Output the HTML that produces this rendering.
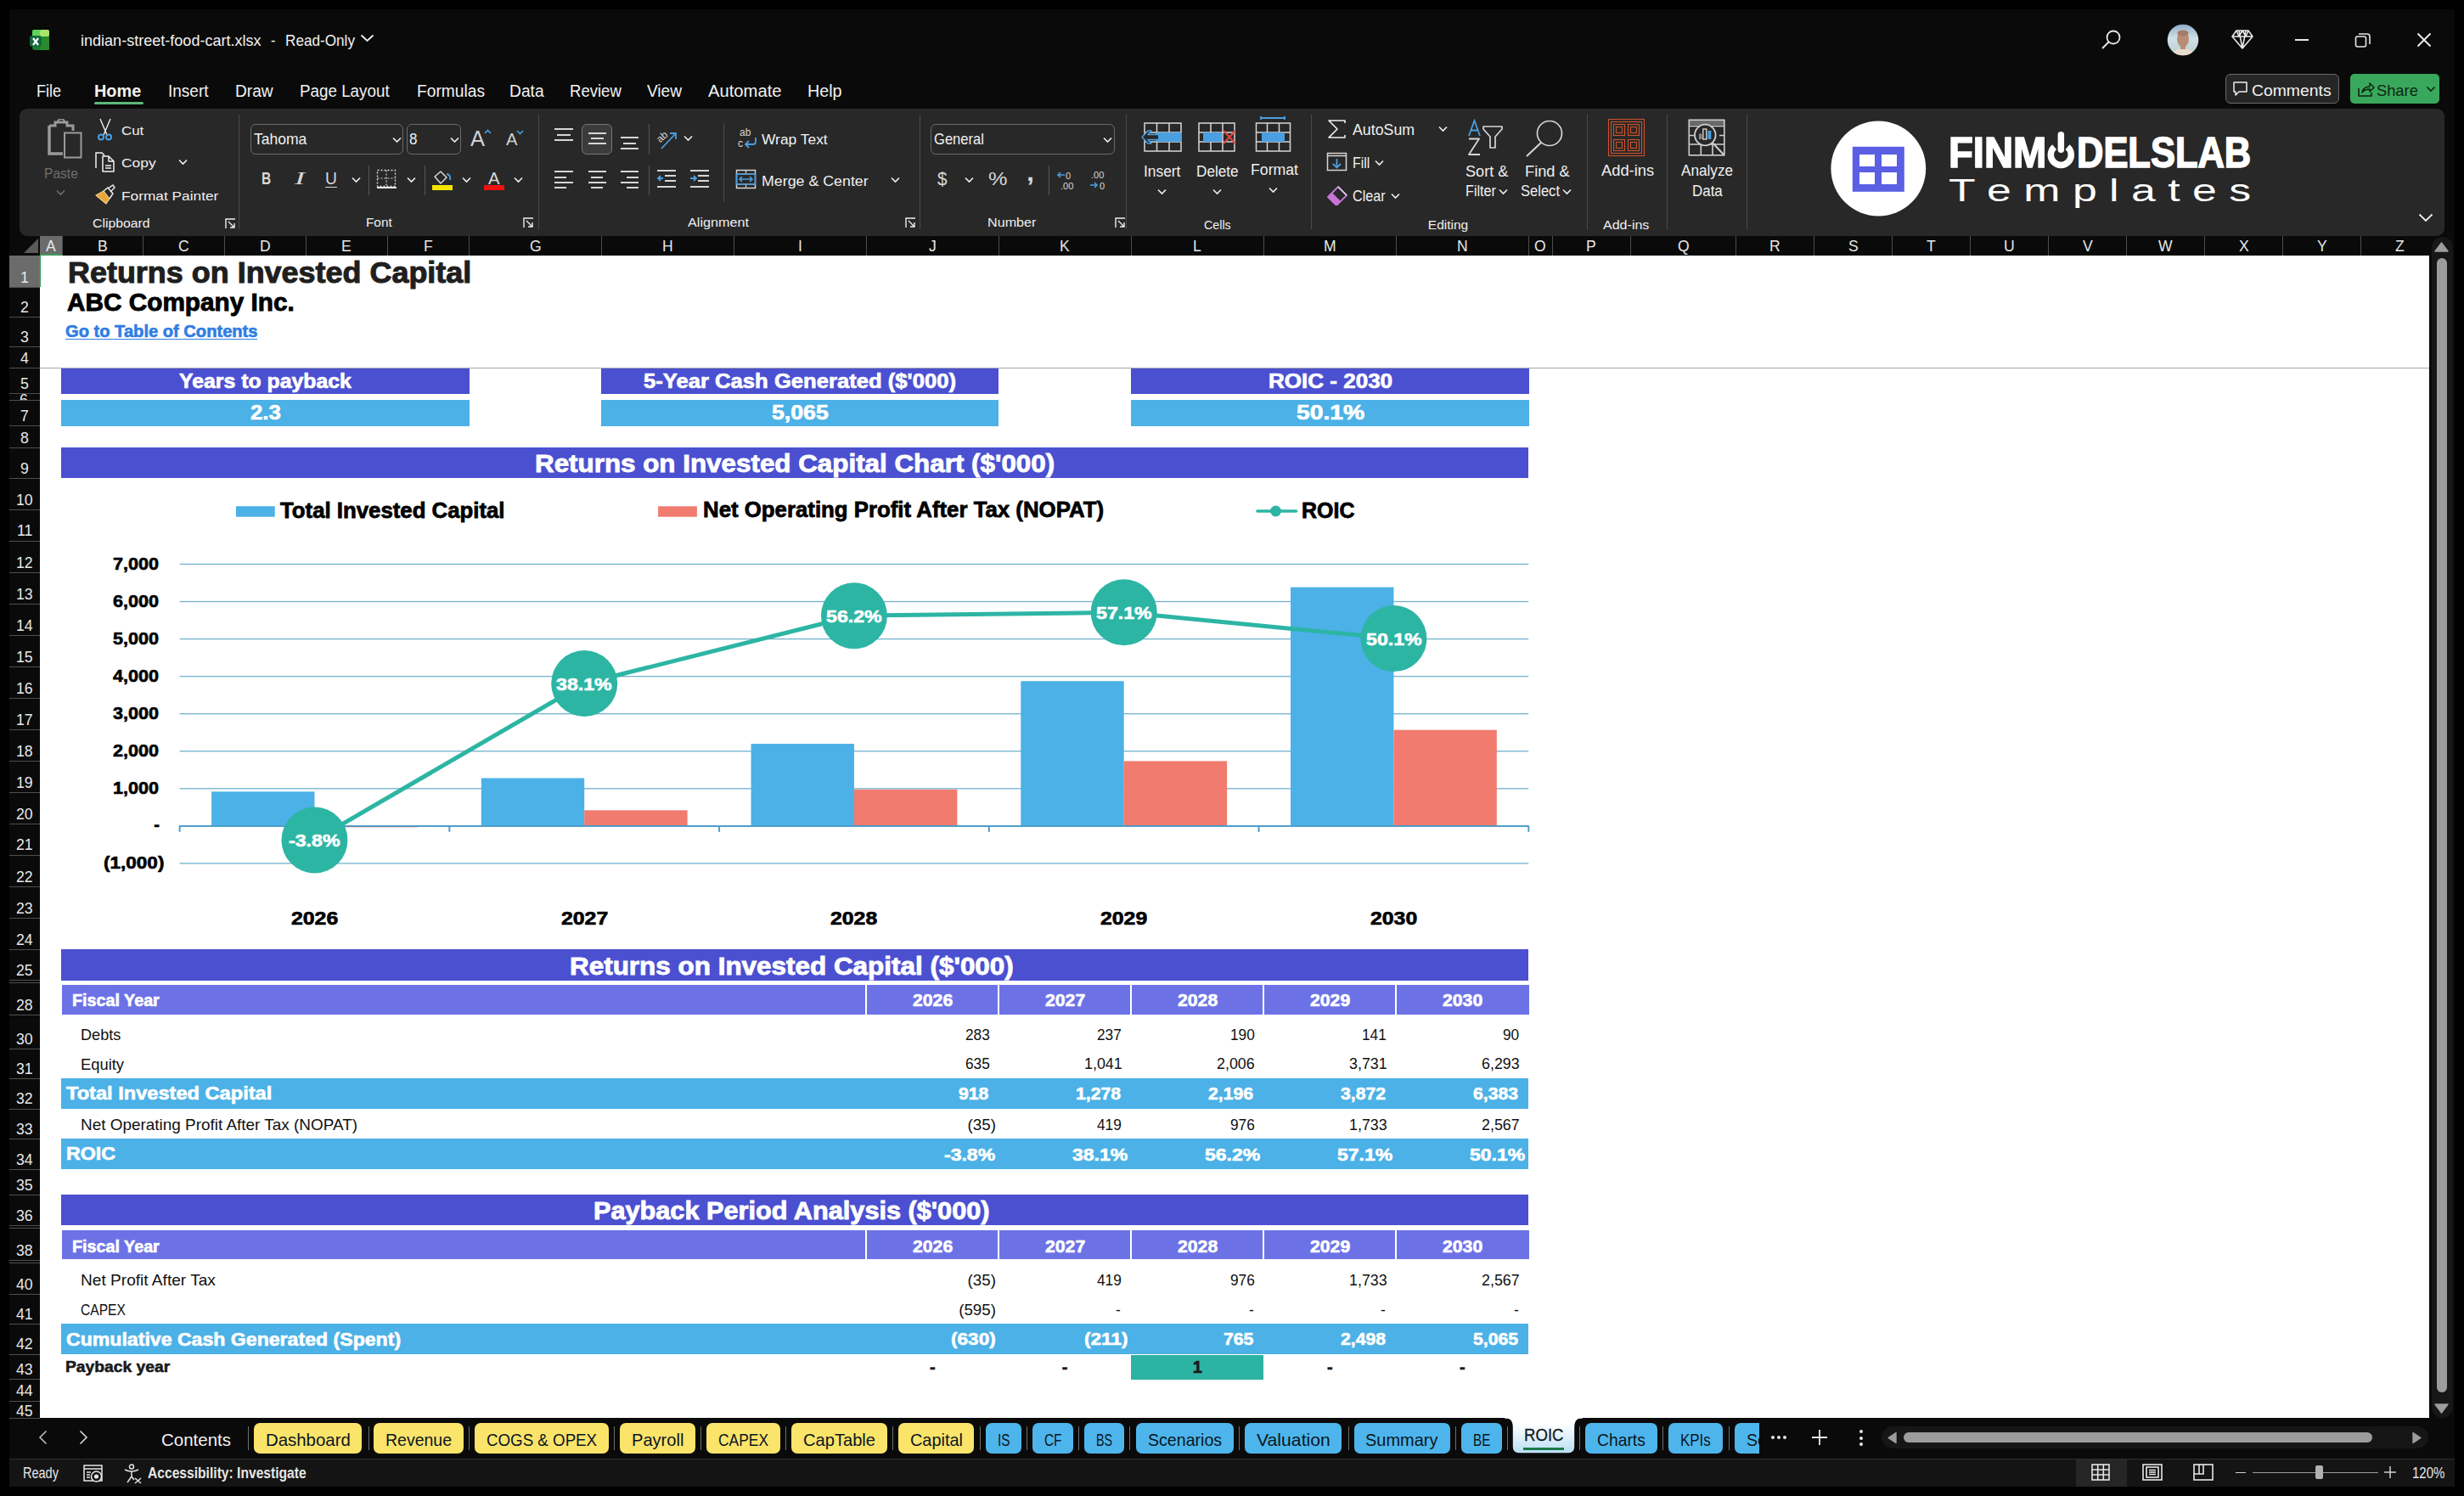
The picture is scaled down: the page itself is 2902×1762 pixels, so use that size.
<!DOCTYPE html><html><head><meta charset='utf-8'><style>
html,body{margin:0;padding:0;}
body{width:2902px;height:1762px;position:relative;overflow:hidden;background:#000;font-family:"Liberation Sans",sans-serif;}
.a{position:absolute;}
.t{position:absolute;white-space:pre;line-height:normal;transform-origin:0 0;}
</style></head><body>
<div class=a style="left:11.00px;top:11.00px;width:2880.00px;height:1740.00px;background:#0a0a0a;"></div>
<svg class=a style="left:35.00px;top:33.00px;" width="28" height="28" viewBox="0 0 28 28">
      <rect x='3' y='2' width='20' height='24' rx='3' fill='#1f7a38'/>
      <rect x='3' y='2' width='10' height='8' rx='2' fill='#5fd35a'/>
      <rect x='12' y='2' width='11' height='8' rx='2' fill='#a8e66a'/>
      <rect x='12' y='10' width='11' height='16' fill='#2a8a2e'/>
      <rect x='0' y='9' width='14' height='13' rx='3' fill='#106b3a'/>
      <path d='M4 12 L10 20 M10 12 L4 20' stroke='#fff' stroke-width='2.2'/>
    </svg>
<div class=t style='left:95.40px;top:36.59px;font-size:19.00px;color:#f2f2f2;transform:scaleX(0.9496);'>indian-street-food-cart.xlsx</div>
<div class=t style='left:318.60px;top:36.59px;font-size:19.00px;color:#f2f2f2;transform:scaleX(0.8533);'>-</div>
<div class=t style='left:335.70px;top:36.59px;font-size:19.00px;color:#f2f2f2;transform:scaleX(0.9028);'>Read-Only</div>
<svg class=a style="left:424.00px;top:40.00px;" width="17" height="10" viewBox="0 0 17 10"><path d='M1.5 1.5 L8.5 8 L15.5 1.5' stroke='#f2f2f2' stroke-width='1.8' fill='none'/></svg>
<svg class=a style="left:2474.00px;top:34.00px;" width="25" height="26" viewBox="0 0 25 26"><circle cx='15' cy='10' r='7.5' stroke='#e8e8e8' stroke-width='1.8' fill='none'/><path d='M9.5 15.5 L2 23' stroke='#e8e8e8' stroke-width='2' /></svg>
<svg class=a style="left:2552.00px;top:28.00px;" width="38" height="38" viewBox="0 0 38 38"><defs><clipPath id='av'><circle cx='19' cy='19' r='18.3'/></clipPath>
      <linearGradient id='avg' x1='0' y1='0' x2='0' y2='1'><stop offset='0' stop-color='#8fa9c9'/><stop offset='0.45' stop-color='#cfe0e6'/><stop offset='1' stop-color='#b9ccd2'/></linearGradient></defs>
      <g clip-path='url(#av)'><rect width='38' height='38' fill='url(#avg)'/><path d='M5 38 Q8 29 19 29 Q30 29 33 38 Z' fill='#e6dccb'/>
      <ellipse cx='19' cy='18' rx='7' ry='9.5' fill='#b98d74'/><ellipse cx='19' cy='11' rx='6.5' ry='3.5' fill='#a57c66'/><rect x='16' y='25' width='6' height='5' fill='#b98d74'/></g></svg>
<svg class=a style="left:2627.00px;top:34.00px;" width="28" height="25" viewBox="0 0 28 25"><path d='M7 2 H21 L26 9 L14 23 L2 9 Z M2 9 H26 M10 2 L14 23 M18 2 L14 23 M7 2 L10 9 L14 2 L18 9 L21 2' stroke='#e8e8e8' stroke-width='1.6' fill='none' stroke-linejoin='round'/></svg>
<div class=a style="left:2703.00px;top:46.00px;width:16.00px;height:1.60px;background:#e8e8e8;"></div>
<svg class=a style="left:2773.00px;top:38.00px;" width="20" height="19" viewBox="0 0 20 19"><rect x='1.5' y='5' width='12' height='12' rx='2' stroke='#e8e8e8' stroke-width='1.6' fill='none'/><path d='M5 2 H15 A3 3 0 0 1 18 5 V14' stroke='#e8e8e8' stroke-width='1.6' fill='none'/></svg>
<svg class=a style="left:2846.00px;top:38.00px;" width="18" height="18" viewBox="0 0 18 18"><path d='M1.5 1.5 L16.5 16.5 M16.5 1.5 L1.5 16.5' stroke='#f0f0f0' stroke-width='1.8'/></svg>
<div class=a style="left:2621.00px;top:87.40px;width:134.20px;height:34.60px;background:#262626;border:1px solid #6a6a6a;border-radius:6px;box-sizing:border-box;"></div>
<svg class=a style="left:2629.00px;top:95.00px;" width="20" height="20" viewBox="0 0 20 20"><path d='M2 2 H17 V13 H8 L4 17 V13 H2 Z' stroke='#f0f0f0' stroke-width='1.5' fill='none' stroke-linejoin='round'/></svg>
<div class=t style='left:2652.30px;top:95.99px;font-size:19.00px;color:#f2f2f2;transform:scaleX(1.0189);'>Comments</div>
<div class=a style="left:2768.20px;top:87.40px;width:104.80px;height:34.60px;background:#3aa85c;border-radius:5px;"></div>
<svg class=a style="left:2775.00px;top:94.00px;" width="22" height="22" viewBox="0 0 22 22"><path d='M3 10 V19 H18 V15' stroke='#0c2614' stroke-width='1.6' fill='none'/><path d='M7 15 C8 10 12 8 16 8 V4 L21 9 L16 14 V11 C12 11 9 12 7 15 Z' stroke='#0c2614' stroke-width='1.5' fill='none' stroke-linejoin='round'/></svg>
<div class=t style='left:2798.70px;top:95.99px;font-size:19.00px;color:#0c2614;transform:scaleX(0.9625);'>Share</div>
<svg class=a style="left:2857.00px;top:101.00px;" width="12" height="8" viewBox="0 0 12 8"><path d='M1.5 1.5 L6 6 L10.5 1.5' stroke='#0c2614' stroke-width='1.6' fill='none'/></svg>
<div class=t style='left:42.80px;top:95.11px;font-size:20.50px;color:#f2f2f2;transform:scaleX(0.8836);'>File</div>
<div class=t style='left:111.20px;top:95.11px;font-size:20.50px;color:#f2f2f2;font-weight:700;transform:scaleX(0.9690);'>Home</div>
<div class=t style='left:198.00px;top:95.11px;font-size:20.50px;color:#f2f2f2;transform:scaleX(0.9263);'>Insert</div>
<div class=t style='left:277.20px;top:95.11px;font-size:20.50px;color:#f2f2f2;transform:scaleX(0.9322);'>Draw</div>
<div class=t style='left:353.00px;top:95.11px;font-size:20.50px;color:#f2f2f2;transform:scaleX(0.9173);'>Page Layout</div>
<div class=t style='left:491.00px;top:95.11px;font-size:20.50px;color:#f2f2f2;transform:scaleX(0.9364);'>Formulas</div>
<div class=t style='left:599.80px;top:95.11px;font-size:20.50px;color:#f2f2f2;transform:scaleX(0.9374);'>Data</div>
<div class=t style='left:670.50px;top:95.11px;font-size:20.50px;color:#f2f2f2;transform:scaleX(0.9045);'>Review</div>
<div class=t style='left:761.80px;top:95.11px;font-size:20.50px;color:#f2f2f2;transform:scaleX(0.9302);'>View</div>
<div class=t style='left:834.00px;top:95.11px;font-size:20.50px;color:#f2f2f2;transform:scaleX(0.9858);'>Automate</div>
<div class=t style='left:950.90px;top:95.11px;font-size:20.50px;color:#f2f2f2;transform:scaleX(0.9627);'>Help</div>
<div class=a style="left:111.30px;top:120.00px;width:57.50px;height:3.00px;background:#5cb87a;border-radius:2px;"></div>
<div class=a style="left:23.20px;top:128.00px;width:2855.60px;height:149.80px;background:#282828;border-radius:9px;"></div>
<svg class=a style="left:54.00px;top:140.00px;" width="44" height="48" viewBox="0 0 44 48"><path d='M4 8 H11 V4 H25 V8 H32 V14' stroke='#9a9a9a' stroke-width='3' fill='none'/>
      <path d='M4 8 V41 H20' stroke='#9a9a9a' stroke-width='3.5' fill='none'/>
      <path d='M14 4 A4 4 0 0 1 22 4' stroke='#9a9a9a' stroke-width='2' fill='none'/>
      <rect x='22' y='16.5' width='19.5' height='29' stroke='#9a9a9a' stroke-width='2' fill='none'/></svg>
<div class=t style='left:52.20px;top:194.59px;font-size:16.50px;color:#707070;transform:scaleX(0.9431);'>Paste</div>
<svg class=a style="left:65.50px;top:223.25px;" width="11.0" height="7.5" viewBox="0 0 11.0 7.5"><path d='M1 1.5 L5.5 6.0 L10.0 1.5' stroke='#707070' stroke-width='1.6' fill='none'/></svg>
<svg class=a style="left:114.00px;top:139.00px;" width="20" height="27" viewBox="0 0 20 27"><path d='M4 1 L12 20 M16 1 L8 20' stroke='#f0f0f0' stroke-width='1.4'/>
      <circle cx='5' cy='22.5' r='3' stroke='#4a9fe0' stroke-width='2' fill='none'/><circle cx='14' cy='22.5' r='3' stroke='#4a9fe0' stroke-width='2' fill='none'/></svg>
<div class=t style='left:142.70px;top:144.82px;font-size:15.50px;color:#f0f0f0;transform:scaleX(1.0902);'>Cut</div>
<svg class=a style="left:111.00px;top:178.00px;" width="26" height="27" viewBox="0 0 26 27"><path d='M2 20 V2 H9 L12 5' stroke='#f0f0f0' stroke-width='1.5' fill='none'/>
      <path d='M10 24 V6 H17 L23 12 V24 Z M17 6 V12 H23 M13 17 H20 M13 20 H20' stroke='#f0f0f0' stroke-width='1.5' fill='none' stroke-linejoin='round'/></svg>
<div class=t style='left:142.70px;top:183.32px;font-size:15.50px;color:#f0f0f0;transform:scaleX(1.1219);'>Copy</div>
<svg class=a style="left:209.80px;top:187.25px;" width="11.0" height="7.5" viewBox="0 0 11.0 7.5"><path d='M1 1.5 L5.5 6.0 L10.0 1.5' stroke='#f0f0f0' stroke-width='1.6' fill='none'/></svg>
<svg class=a style="left:111.00px;top:217.00px;" width="26" height="25" viewBox="0 0 26 25"><path d='M2 13 L11 8 L18 17 L14 23 Z' fill='#e8a63a' stroke='#f3d08a' stroke-width='1.2' stroke-linejoin='round'/>
      <path d='M11 8 L16 4 L22 11 L18 17' stroke='#f0f0f0' stroke-width='1.4' fill='none'/><path d='M16 5 L22 1 L24 4 L19 9' stroke='#f0f0f0' stroke-width='1.4' fill='none'/></svg>
<div class=t style='left:142.70px;top:222.42px;font-size:15.50px;color:#f0f0f0;transform:scaleX(1.1150);'>Format Painter</div>
<div class=t style='left:109.40px;top:253.52px;font-size:15.50px;color:#f0f0f0;transform:scaleX(1.0187);'>Clipboard</div>
<svg class=a style="left:264.50px;top:256.50px;" width="13" height="13" viewBox="0 0 13 13"><path d='M1 12 V1 H12 M4 4 L11 11 M11 6 V11 H6' stroke='#f0f0f0' stroke-width='1.4' fill='none'/></svg>
<div class=a style="left:281.40px;top:135.00px;width:1.00px;height:135.00px;background:#4a4a4a;"></div>
<div class=a style="left:295.30px;top:146.30px;width:180.20px;height:35.50px;border:1px solid #6a6a6a;border-radius:6px;box-sizing:border-box;"></div>
<div class=t style='left:298.70px;top:154.33px;font-size:18.20px;color:#f0f0f0;transform:scaleX(0.9629);'>Tahoma</div>
<svg class=a style="left:461.80px;top:160.75px;" width="11.0" height="7.5" viewBox="0 0 11.0 7.5"><path d='M1 1.5 L5.5 6.0 L10.0 1.5' stroke='#f0f0f0' stroke-width='1.6' fill='none'/></svg>
<div class=a style="left:479.40px;top:146.30px;width:64.00px;height:35.50px;border:1px solid #6a6a6a;border-radius:6px;box-sizing:border-box;"></div>
<div class=t style='left:482.30px;top:154.33px;font-size:18.20px;color:#f0f0f0;transform:scaleX(0.9383);'>8</div>
<svg class=a style="left:529.50px;top:160.75px;" width="11.0" height="7.5" viewBox="0 0 11.0 7.5"><path d='M1 1.5 L5.5 6.0 L10.0 1.5' stroke='#f0f0f0' stroke-width='1.6' fill='none'/></svg>
<div class=t style='left:553.50px;top:147.54px;font-size:26.00px;color:#d0d0d0;transform:scaleX(0.9802);'>A</div>
<svg class=a style="left:570.00px;top:152.00px;" width="9" height="6" viewBox="0 0 9 6"><path d='M1 5 L4.5 1.5 L8 5' stroke='#4a9fe0' stroke-width='1.6' fill='none'/></svg>
<div class=t style='left:595.60px;top:152.15px;font-size:21.00px;color:#d0d0d0;transform:scaleX(0.9632);'>A</div>
<svg class=a style="left:608.00px;top:153.00px;" width="9" height="6" viewBox="0 0 9 6"><path d='M1 1 L4.5 4.5 L8 1' stroke='#4a9fe0' stroke-width='1.6' fill='none'/></svg>
<div class=t style='left:307.80px;top:198.05px;font-size:21.00px;color:#d8d8d8;font-weight:700;transform:scaleX(0.7382);'>B</div>
<div class=t style='left:346.50px;top:198.05px;font-size:21.00px;color:#d8d8d8;transform:scaleX(1.7455);font-style:italic;font-family:"Liberation Serif";'>I</div>
<div class=t style='left:383.00px;top:199.43px;font-size:19.50px;color:#d8d8d8;transform:scaleX(0.9863);'>U</div>
<div class=a style="left:383.00px;top:219.50px;width:14.00px;height:1.60px;background:#d8d8d8;"></div>
<svg class=a style="left:413.50px;top:208.25px;" width="11.0" height="7.5" viewBox="0 0 11.0 7.5"><path d='M1 1.5 L5.5 6.0 L10.0 1.5' stroke='#f0f0f0' stroke-width='1.6' fill='none'/></svg>
<div class=a style="left:434.40px;top:194.50px;width:1.00px;height:35.80px;background:#555;"></div>
<svg class=a style="left:443.00px;top:199.00px;" width="25" height="25" viewBox="0 0 25 25"><rect x='1.5' y='1.5' width='21' height='19' stroke='#d8d8d8' stroke-width='1.4' stroke-dasharray='2 2' fill='none'/>
      <path d='M12 1.5 V20.5 M1.5 11 H22.5' stroke='#d8d8d8' stroke-width='1.2' stroke-dasharray='2 2'/><rect x='1' y='21' width='23' height='2' fill='#e8e8e8'/></svg>
<svg class=a style="left:478.80px;top:208.25px;" width="11.0" height="7.5" viewBox="0 0 11.0 7.5"><path d='M1 1.5 L5.5 6.0 L10.0 1.5' stroke='#f0f0f0' stroke-width='1.6' fill='none'/></svg>
<div class=a style="left:499.50px;top:194.50px;width:1.00px;height:35.80px;background:#555;"></div>
<svg class=a style="left:508.00px;top:199.00px;" width="27" height="26" viewBox="0 0 27 26"><path d='M4 9 L11 3 L18 10 L11 17 Z' stroke='#d8d8d8' stroke-width='1.5' fill='none' stroke-linejoin='round'/>
      <path d='M18 6 C21 6 23 9 22 13' stroke='#4a9fe0' stroke-width='2' fill='none'/><rect x='1' y='19' width='24' height='6' fill='#f5e400'/></svg>
<svg class=a style="left:543.80px;top:208.25px;" width="11.0" height="7.5" viewBox="0 0 11.0 7.5"><path d='M1 1.5 L5.5 6.0 L10.0 1.5' stroke='#f0f0f0' stroke-width='1.6' fill='none'/></svg>
<div class=t style='left:575.00px;top:198.53px;font-size:19.50px;color:#d8d8d8;transform:scaleX(1.0449);'>A</div>
<div class=a style="left:570.00px;top:218.30px;width:24.00px;height:5.70px;background:#ee1111;"></div>
<svg class=a style="left:604.50px;top:208.25px;" width="11.0" height="7.5" viewBox="0 0 11.0 7.5"><path d='M1 1.5 L5.5 6.0 L10.0 1.5' stroke='#f0f0f0' stroke-width='1.6' fill='none'/></svg>
<div class=t style='left:430.50px;top:253.22px;font-size:15.50px;color:#f0f0f0;transform:scaleX(0.9898);'>Font</div>
<svg class=a style="left:616.00px;top:256.00px;" width="13" height="13" viewBox="0 0 13 13"><path d='M1 12 V1 H12 M4 4 L11 11 M11 6 V11 H6' stroke='#f0f0f0' stroke-width='1.4' fill='none'/></svg>
<div class=a style="left:633.60px;top:135.00px;width:1.00px;height:135.00px;background:#4a4a4a;"></div>
<div class=a style="left:685.40px;top:146.30px;width:35.50px;height:35.50px;background:#3b3b3b;border:1px solid #777;border-radius:6px;box-sizing:border-box;"></div>
<div class=a style="left:653.30px;top:151.30px;width:21.50px;height:2.00px;background:#d6d6d6;"></div>
<div class=a style="left:656.30px;top:157.80px;width:15.50px;height:2.00px;background:#d6d6d6;"></div>
<div class=a style="left:653.30px;top:164.00px;width:21.50px;height:2.00px;background:#d6d6d6;"></div>
<div class=a style="left:692.50px;top:156.00px;width:21.50px;height:2.00px;background:#d6d6d6;"></div>
<div class=a style="left:695.50px;top:162.00px;width:15.50px;height:2.00px;background:#d6d6d6;"></div>
<div class=a style="left:692.50px;top:168.00px;width:21.50px;height:2.00px;background:#d6d6d6;"></div>
<div class=a style="left:730.80px;top:161.00px;width:21.50px;height:2.00px;background:#d6d6d6;"></div>
<div class=a style="left:733.80px;top:167.50px;width:15.50px;height:2.00px;background:#d6d6d6;"></div>
<div class=a style="left:730.80px;top:174.00px;width:21.50px;height:2.00px;background:#d6d6d6;"></div>
<div class=a style="left:763.50px;top:146.00px;width:1.00px;height:36.00px;background:#555;"></div>
<svg class=a style="left:771.00px;top:149.00px;" width="29" height="28" viewBox="0 0 29 28"><text x='2' y='16' font-family='Liberation Sans' font-size='12' fill='#d6d6d6' transform='rotate(-40 9 12)'>ab</text>
      <path d='M8 26 L25 8 M18 8 H25 V15' stroke='#4a9fe0' stroke-width='1.8' fill='none'/></svg>
<svg class=a style="left:804.50px;top:159.25px;" width="11.0" height="7.5" viewBox="0 0 11.0 7.5"><path d='M1 1.5 L5.5 6.0 L10.0 1.5' stroke='#f0f0f0' stroke-width='1.6' fill='none'/></svg>
<div class=a style="left:851.60px;top:145.00px;width:1.00px;height:93.00px;background:#4a4a4a;"></div>
<svg class=a style="left:869.00px;top:149.00px;" width="24" height="28" viewBox="0 0 24 28"><text x='2' y='11' font-family='Liberation Sans' font-size='12' fill='#d6d6d6'>ab</text><text x='0' y='24' font-family='Liberation Sans' font-size='12' fill='#d6d6d6'>c</text>
      <path d='M21 13 V18 A3 3 0 0 1 18 21 H10 M13 17 L9 21 L13 25' stroke='#4a9fe0' stroke-width='1.8' fill='none'/></svg>
<div class=t style='left:897.30px;top:156.44px;font-size:15.80px;color:#f0f0f0;transform:scaleX(1.1016);'>Wrap Text</div>
<div class=a style="left:653.30px;top:201.30px;width:21.50px;height:2.00px;background:#d6d6d6;"></div>
<div class=a style="left:653.30px;top:207.50px;width:14.00px;height:2.00px;background:#d6d6d6;"></div>
<div class=a style="left:653.30px;top:213.60px;width:21.50px;height:2.00px;background:#d6d6d6;"></div>
<div class=a style="left:653.30px;top:219.80px;width:14.00px;height:2.00px;background:#d6d6d6;"></div>
<div class=a style="left:692.50px;top:201.30px;width:21.50px;height:2.00px;background:#d6d6d6;"></div>
<div class=a style="left:730.80px;top:201.30px;width:21.50px;height:2.00px;background:#d6d6d6;"></div>
<div class=a style="left:696.25px;top:207.50px;width:14.00px;height:2.00px;background:#d6d6d6;"></div>
<div class=a style="left:738.30px;top:207.50px;width:14.00px;height:2.00px;background:#d6d6d6;"></div>
<div class=a style="left:692.50px;top:213.60px;width:21.50px;height:2.00px;background:#d6d6d6;"></div>
<div class=a style="left:730.80px;top:213.60px;width:21.50px;height:2.00px;background:#d6d6d6;"></div>
<div class=a style="left:696.25px;top:219.80px;width:14.00px;height:2.00px;background:#d6d6d6;"></div>
<div class=a style="left:738.30px;top:219.80px;width:14.00px;height:2.00px;background:#d6d6d6;"></div>
<div class=a style="left:763.50px;top:194.50px;width:1.00px;height:35.80px;background:#555;"></div>
<svg class=a style="left:773.00px;top:199.00px;" width="24" height="24" viewBox="0 0 24 24"><path d='M1 2 H23 M10 8 H23 M10 14 H23 M1 21 H23' stroke='#d6d6d6' stroke-width='1.8'/><path d='M8 11 H2 M5 8 L2 11 L5 14' stroke='#4a9fe0' stroke-width='1.8' fill='none'/></svg>
<svg class=a style="left:812.00px;top:199.00px;" width="24" height="24" viewBox="0 0 24 24"><path d='M1 2 H23 M10 8 H23 M10 14 H23 M1 21 H23' stroke='#d6d6d6' stroke-width='1.8'/><path d='M1 11 H8 M5 8 L8 11 L5 14' stroke='#4a9fe0' stroke-width='1.8' fill='none'/></svg>
<svg class=a style="left:866.00px;top:199.00px;" width="25" height="25" viewBox="0 0 25 25"><rect x='1.5' y='1.5' width='22' height='21' stroke='#d6d6d6' stroke-width='1.5' fill='none'/><path d='M1.5 6 H23.5 M1.5 18 H23.5 M12.5 1.5 V6 M12.5 18 V22.5' stroke='#d6d6d6' stroke-width='1.2'/>
      <rect x='1.5' y='6' width='22' height='12' stroke='#4a9fe0' stroke-width='1.5' fill='none'/><path d='M5 12 H20 M8 9 L5 12 L8 15 M17 9 L20 12 L17 15' stroke='#4a9fe0' stroke-width='1.6' fill='none'/></svg>
<div class=t style='left:897.30px;top:204.54px;font-size:15.80px;color:#f0f0f0;transform:scaleX(1.1272);'>Merge &amp; Center</div>
<svg class=a style="left:1048.50px;top:208.25px;" width="11.0" height="7.5" viewBox="0 0 11.0 7.5"><path d='M1 1.5 L5.5 6.0 L10.0 1.5' stroke='#f0f0f0' stroke-width='1.6' fill='none'/></svg>
<div class=t style='left:810.00px;top:253.32px;font-size:15.50px;color:#f0f0f0;transform:scaleX(1.0444);'>Alignment</div>
<svg class=a style="left:1066.00px;top:256.00px;" width="13" height="13" viewBox="0 0 13 13"><path d='M1 12 V1 H12 M4 4 L11 11 M11 6 V11 H6' stroke='#f0f0f0' stroke-width='1.4' fill='none'/></svg>
<div class=a style="left:1083.20px;top:135.00px;width:1.00px;height:135.00px;background:#4a4a4a;"></div>
<div class=a style="left:1096.00px;top:146.30px;width:217.30px;height:35.50px;border:1px solid #6a6a6a;border-radius:6px;box-sizing:border-box;"></div>
<div class=t style='left:1099.50px;top:154.33px;font-size:18.20px;color:#f0f0f0;transform:scaleX(0.9116);'>General</div>
<svg class=a style="left:1299.00px;top:160.75px;" width="11.0" height="7.5" viewBox="0 0 11.0 7.5"><path d='M1 1.5 L5.5 6.0 L10.0 1.5' stroke='#f0f0f0' stroke-width='1.6' fill='none'/></svg>
<div class=t style='left:1103.50px;top:197.72px;font-size:22.00px;color:#d8d8d8;transform:scaleX(0.9388);'>$</div>
<svg class=a style="left:1135.50px;top:208.25px;" width="11.0" height="7.5" viewBox="0 0 11.0 7.5"><path d='M1 1.5 L5.5 6.0 L10.0 1.5' stroke='#f0f0f0' stroke-width='1.6' fill='none'/></svg>
<div class=t style='left:1163.60px;top:197.72px;font-size:22.00px;color:#d8d8d8;transform:scaleX(1.1502);'>%</div>
<div class=t style='left:1208.50px;top:188.20px;font-size:28.00px;color:#d8d8d8;font-weight:700;transform:scaleX(1.1566);'>,</div>
<div class=a style="left:1235.40px;top:194.50px;width:1.00px;height:35.80px;background:#555;"></div>
<svg class=a style="left:1244.00px;top:199.00px;" width="25" height="26" viewBox="0 0 25 26"><path d='M2 7 H10 M5 4 L2 7 L5 10' stroke='#4a9fe0' stroke-width='1.6' fill='none'/>
      <text x='11' y='12' font-family='Liberation Sans' font-size='11' fill='#d8d8d8'>0</text><text x='5' y='24' font-family='Liberation Sans' font-size='11' fill='#d8d8d8'>.00</text></svg>
<svg class=a style="left:1282.00px;top:199.00px;" width="26" height="26" viewBox="0 0 26 26"><text x='3' y='11' font-family='Liberation Sans' font-size='11' fill='#d8d8d8'>.00</text>
      <path d='M2 19 H10 M7 16 L10 19 L7 22' stroke='#4a9fe0' stroke-width='1.6' fill='none'/><text x='13' y='24' font-family='Liberation Sans' font-size='11' fill='#d8d8d8'>0</text></svg>
<div class=t style='left:1163.00px;top:252.72px;font-size:15.50px;color:#f0f0f0;transform:scaleX(1.0410);'>Number</div>
<svg class=a style="left:1312.50px;top:256.00px;" width="13" height="13" viewBox="0 0 13 13"><path d='M1 12 V1 H12 M4 4 L11 11 M11 6 V11 H6' stroke='#f0f0f0' stroke-width='1.4' fill='none'/></svg>
<div class=a style="left:1325.50px;top:135.00px;width:1.00px;height:135.00px;background:#4a4a4a;"></div>
<svg class=a style="left:1342.00px;top:143.00px;" width="52" height="38" viewBox="0 0 52 38"><g stroke='#d6d6d6' stroke-width='1.5' fill='none'><rect x='6' y='2' width='43' height='33'/><path d='M6 13 H49 M6 24 H49 M20.5 2 V35 M35 2 V35'/></g>
      <rect x='19' y='13' width='31' height='11' fill='#4a9fe0'/><path d='M22 15.5 H10 L14 11 H10 L3 18.5 L10 26 H14 L10 21.5 H22' stroke='#4a9fe0' stroke-width='1.6' fill='#282828' stroke-linejoin='round'/></svg>
<div class=t style='left:1347.00px;top:192.41px;font-size:18.00px;color:#f0f0f0;transform:scaleX(0.9638);'>Insert</div>
<svg class=a style="left:1362.50px;top:222.25px;" width="11.0" height="7.5" viewBox="0 0 11.0 7.5"><path d='M1 1.5 L5.5 6.0 L10.0 1.5' stroke='#f0f0f0' stroke-width='1.6' fill='none'/></svg>
<svg class=a style="left:1411.00px;top:143.00px;" width="48" height="38" viewBox="0 0 48 38"><g stroke='#d6d6d6' stroke-width='1.5' fill='none'><rect x='1' y='2' width='42' height='33'/><path d='M1 13 H43 M1 24 H43 M15 2 V35 M29 2 V35'/></g>
      <rect x='6' y='13' width='22' height='11' fill='#4a9fe0'/><path d='M30 11 L44 26 M44 11 L30 26' stroke='#e04646' stroke-width='2.2'/></svg>
<div class=t style='left:1409.00px;top:192.41px;font-size:18.00px;color:#f0f0f0;transform:scaleX(0.9533);'>Delete</div>
<svg class=a style="left:1427.50px;top:222.25px;" width="11.0" height="7.5" viewBox="0 0 11.0 7.5"><path d='M1 1.5 L5.5 6.0 L10.0 1.5' stroke='#f0f0f0' stroke-width='1.6' fill='none'/></svg>
<svg class=a style="left:1478.00px;top:137.00px;" width="44" height="44" viewBox="0 0 44 44"><path d='M7 2 H35 M7 0 V4 M35 0 V4' stroke='#4a9fe0' stroke-width='1.8'/><g stroke='#d6d6d6' stroke-width='1.5' fill='none'><rect x='1.5' y='8' width='40' height='33'/><path d='M1.5 19 H41.5 M1.5 30 H41.5 M14.5 8 V41 M28.5 8 V41'/></g>
      <rect x='8' y='19' width='27' height='11' fill='#4a9fe0'/></svg>
<div class=t style='left:1472.80px;top:190.41px;font-size:18.00px;color:#f0f0f0;transform:scaleX(0.9822);'>Format</div>
<svg class=a style="left:1493.50px;top:220.25px;" width="11.0" height="7.5" viewBox="0 0 11.0 7.5"><path d='M1 1.5 L5.5 6.0 L10.0 1.5' stroke='#f0f0f0' stroke-width='1.6' fill='none'/></svg>
<div class=t style='left:1418.00px;top:255.72px;font-size:15.50px;color:#f0f0f0;transform:scaleX(0.9201);'>Cells</div>
<div class=a style="left:1543.80px;top:135.00px;width:1.00px;height:135.00px;background:#4a4a4a;"></div>
<svg class=a style="left:1563.00px;top:141.00px;" width="24" height="22" viewBox="0 0 24 22"><path d='M21 4 V1 H2 L12 11 L2 21 H21 V18' stroke='#f0f0f0' stroke-width='1.6' fill='none' stroke-linejoin='round'/></svg>
<div class=t style='left:1593.30px;top:142.91px;font-size:18.00px;color:#f0f0f0;transform:scaleX(0.9872);'>AutoSum</div>
<svg class=a style="left:1693.50px;top:148.25px;" width="11.0" height="7.5" viewBox="0 0 11.0 7.5"><path d='M1 1.5 L5.5 6.0 L10.0 1.5' stroke='#f0f0f0' stroke-width='1.6' fill='none'/></svg>
<svg class=a style="left:1562.00px;top:179.00px;" width="26" height="24" viewBox="0 0 26 24"><rect x='1.5' y='1.5' width='22' height='20' stroke='#d6d6d6' stroke-width='1.5' fill='none'/><path d='M1.5 4.5 H23.5' stroke='#d6d6d6' stroke-width='1.5'/><path d='M12.5 8 V18 M8 14 L12.5 18.5 L17 14' stroke='#4a9fe0' stroke-width='1.8' fill='none'/></svg>
<div class=t style='left:1593.30px;top:182.31px;font-size:18.00px;color:#f0f0f0;transform:scaleX(0.8826);'>Fill</div>
<svg class=a style="left:1618.50px;top:188.25px;" width="11.0" height="7.5" viewBox="0 0 11.0 7.5"><path d='M1 1.5 L5.5 6.0 L10.0 1.5' stroke='#f0f0f0' stroke-width='1.6' fill='none'/></svg>
<svg class=a style="left:1562.00px;top:217.00px;" width="26" height="25" viewBox="0 0 26 25"><path d='M2 15 L14 3 L24 13 L12 25 Z' stroke='#c774d6' stroke-width='1.8' fill='none' stroke-linejoin='round'/><path d='M2 15 L7 10 L17 20 L12 25 Z' fill='#c774d6'/><path d='M14 3 L24 13' stroke='#d6d6d6' stroke-width='1.6'/></svg>
<div class=t style='left:1593.30px;top:220.81px;font-size:18.00px;color:#f0f0f0;transform:scaleX(0.8973);'>Clear</div>
<svg class=a style="left:1637.50px;top:227.25px;" width="11.0" height="7.5" viewBox="0 0 11.0 7.5"><path d='M1 1.5 L5.5 6.0 L10.0 1.5' stroke='#f0f0f0' stroke-width='1.6' fill='none'/></svg>
<svg class=a style="left:1727.00px;top:140.00px;" width="48" height="46" viewBox="0 0 48 46"><path d='M3 20 L9.5 2 L16 20 M5.5 13.5 H13.5' stroke='#4a9fe0' stroke-width='1.8' fill='none'/>
      <path d='M3 23.5 H15 L3 42 H16' stroke='#d6d6d6' stroke-width='1.8' fill='none' stroke-linejoin='round'/>
      <path d='M20 9 H42 V12 L34 21 V34 H28 V21 L20 12 Z' stroke='#d6d6d6' stroke-width='1.7' fill='none' stroke-linejoin='round'/></svg>
<div class=t style='left:1725.60px;top:192.41px;font-size:18.00px;color:#f0f0f0;transform:scaleX(1.0074);'>Sort &amp;</div>
<div class=t style='left:1725.60px;top:215.41px;font-size:18.00px;color:#f0f0f0;transform:scaleX(0.9000);'>Filter</div>
<svg class=a style="left:1764.50px;top:222.25px;" width="11.0" height="7.5" viewBox="0 0 11.0 7.5"><path d='M1 1.5 L5.5 6.0 L10.0 1.5' stroke='#f0f0f0' stroke-width='1.6' fill='none'/></svg>
<svg class=a style="left:1796.00px;top:140.00px;" width="48" height="46" viewBox="0 0 48 46"><circle cx='29' cy='17' r='14.5' stroke='#d6d6d6' stroke-width='1.7' fill='none'/><path d='M19 28 L2 44' stroke='#d6d6d6' stroke-width='2'/></svg>
<div class=t style='left:1795.50px;top:192.41px;font-size:18.00px;color:#f0f0f0;transform:scaleX(1.0129);'>Find &amp;</div>
<div class=t style='left:1790.60px;top:215.41px;font-size:18.00px;color:#f0f0f0;transform:scaleX(0.9194);'>Select</div>
<svg class=a style="left:1839.50px;top:222.25px;" width="11.0" height="7.5" viewBox="0 0 11.0 7.5"><path d='M1 1.5 L5.5 6.0 L10.0 1.5' stroke='#f0f0f0' stroke-width='1.6' fill='none'/></svg>
<div class=t style='left:1681.80px;top:255.72px;font-size:15.50px;color:#f0f0f0;'>Editing</div>
<div class=a style="left:1868.50px;top:135.00px;width:1.00px;height:135.00px;background:#4a4a4a;"></div>
<svg class=a style="left:1893.00px;top:139.00px;" width="46" height="46" viewBox="0 0 46 46"><g stroke='#c9532c' stroke-width='1.1' fill='none'><rect x='1.5' y='1.5' width='42' height='43'/><rect x='4.5' y='4.5' width='36' height='37'/><rect x='7.5' y='7.5' width='13' height='13'/><rect x='10.5' y='10.5' width='7' height='7'/><rect x='24.5' y='7.5' width='13' height='13'/><rect x='27.5' y='10.5' width='7' height='7'/><rect x='7.5' y='25.5' width='13' height='13'/><rect x='10.5' y='28.5' width='7' height='7'/><rect x='24.5' y='25.5' width='13' height='13'/><rect x='27.5' y='28.5' width='7' height='7'/></g></svg>
<div class=t style='left:1885.50px;top:191.21px;font-size:18.00px;color:#f0f0f0;transform:scaleX(1.0175);'>Add-ins</div>
<div class=t style='left:1888.00px;top:255.72px;font-size:15.50px;color:#f0f0f0;transform:scaleX(1.0350);'>Add-ins</div>
<div class=a style="left:1963.00px;top:135.00px;width:1.00px;height:135.00px;background:#4a4a4a;"></div>
<svg class=a style="left:1987.00px;top:139.00px;" width="46" height="46" viewBox="0 0 46 46"><rect x='2' y='2' width='42' height='6' fill='#6a6a6a'/>
      <g stroke='#cfcfcf' stroke-width='1.6' fill='none'><rect x='2.3' y='2.3' width='41.5' height='41.5'/><path d='M2.3 9.5 H44 M2.3 31 H44 M16.3 31 V44 M30 31 V44 M2.3 20.5 H8 M38 20.5 H44'/></g>
      <circle cx='21.3' cy='20' r='12.3' stroke='#cfcfcf' stroke-width='1.8' fill='#282828'/><path d='M29.8 29 L43 43' stroke='#cfcfcf' stroke-width='2'/>
      <rect x='14' y='18.5' width='3.4' height='6.5' fill='#8a8a8a'/><rect x='18.8' y='13' width='4' height='12' stroke='#e0e0e0' stroke-width='1.3' fill='none'/><rect x='24.5' y='15' width='3.8' height='10' fill='#4a9fe0'/></svg>
<div class=t style='left:1980.00px;top:190.81px;font-size:18.00px;color:#f0f0f0;transform:scaleX(0.9524);'>Analyze</div>
<div class=t style='left:1992.70px;top:215.21px;font-size:18.00px;color:#f0f0f0;transform:scaleX(0.9413);'>Data</div>
<div class=a style="left:2056.60px;top:135.00px;width:1.00px;height:135.00px;background:#4a4a4a;"></div>
<svg class=a style="left:2156.00px;top:142.00px;" width="113" height="113" viewBox="0 0 113 113"><circle cx='56.3' cy='56.5' r='55.9' fill='#ffffff'/>
      <rect x='25.8' y='30.8' width='61' height='53' fill='#5a5fe3'/>
      <rect x='34' y='40' width='18' height='14' fill='#fff'/><rect x='60' y='40' width='18' height='14' fill='#fff'/>
      <rect x='34' y='61' width='18' height='14' fill='#fff'/><rect x='60' y='61' width='18' height='14' fill='#fff'/></svg>
<div class=t style='left:2294.50px;top:151.42px;font-size:50.00px;color:#ffffff;font-weight:700;transform:scaleX(0.9451);-webkit-text-stroke:1.6px #fff;'>FINM</div>
<div class=t style='left:2445.50px;top:151.42px;font-size:50.00px;color:#ffffff;font-weight:700;transform:scaleX(0.8691);-webkit-text-stroke:1.6px #fff;'>DELSLAB</div>
<svg class=a style="left:2408.00px;top:152.00px;" width="40" height="48" viewBox="0 0 40 48"><path d='M11.6 21.2 A12 12 0 1 0 27.0 21.2' stroke='#fff' stroke-width='7.5' fill='none'/><rect x='15.6' y='3' width='7.5' height='25' rx='3.7' fill='#fff'/></svg>
<div class=t style='left:2295.30px;top:203.90px;font-size:37.00px;color:#ffffff;transform:scaleX(1.4006);'>T e m p l a t e s</div>
<svg class=a style="left:2848.00px;top:251.00px;" width="18" height="12" viewBox="0 0 18 12"><path d='M1.5 1.5 L9 9 L16.5 1.5' stroke='#f0f0f0' stroke-width='1.8' fill='none'/></svg>
<div class=a style="left:47.30px;top:300.60px;width:2813.70px;height:1369.40px;background:#ffffff;"></div>
<div class=a style="left:11.00px;top:278.00px;width:2850.00px;height:22.60px;background:#0a0a0a;"></div>
<svg class=a style="left:11.00px;top:278.00px;" width="36" height="22" viewBox="0 0 36 22"><path d='M34 3 V20 H17 Z' fill='#5a5a5a'/></svg>
<div class=a style="left:47.30px;top:278.00px;width:25.70px;height:22.60px;background:#6b6b6b;"></div>
<div class=a style="left:47.30px;top:299.00px;width:25.70px;height:1.60px;background:#3c9a5a;"></div>
<div class=a style="left:72.50px;top:278.00px;width:1.00px;height:22.60px;background:#4e4e4e;"></div>
<div class=t style='left:54.29px;top:279.45px;font-size:18.50px;color:#e8e8e8;transform:scaleX(0.9500);'>A</div>
<div class=a style="left:167.50px;top:278.00px;width:1.00px;height:22.60px;background:#4e4e4e;"></div>
<div class=t style='left:114.64px;top:279.45px;font-size:18.50px;color:#e8e8e8;transform:scaleX(0.9500);'>B</div>
<div class=a style="left:263.80px;top:278.00px;width:1.00px;height:22.60px;background:#4e4e4e;"></div>
<div class=t style='left:209.80px;top:279.45px;font-size:18.50px;color:#e8e8e8;transform:scaleX(0.9500);'>C</div>
<div class=a style="left:359.70px;top:278.00px;width:1.00px;height:22.60px;background:#4e4e4e;"></div>
<div class=t style='left:305.90px;top:279.45px;font-size:18.50px;color:#e8e8e8;transform:scaleX(0.9500);'>D</div>
<div class=a style="left:455.80px;top:278.00px;width:1.00px;height:22.60px;background:#4e4e4e;"></div>
<div class=t style='left:402.39px;top:279.45px;font-size:18.50px;color:#e8e8e8;transform:scaleX(0.9500);'>E</div>
<div class=a style="left:552.00px;top:278.00px;width:1.00px;height:22.60px;background:#4e4e4e;"></div>
<div class=t style='left:499.03px;top:279.45px;font-size:18.50px;color:#e8e8e8;transform:scaleX(0.9500);'>F</div>
<div class=a style="left:707.80px;top:278.00px;width:1.00px;height:22.60px;background:#4e4e4e;"></div>
<div class=t style='left:623.56px;top:279.45px;font-size:18.50px;color:#e8e8e8;transform:scaleX(0.9500);'>G</div>
<div class=a style="left:863.90px;top:278.00px;width:1.00px;height:22.60px;background:#4e4e4e;"></div>
<div class=t style='left:780.00px;top:279.45px;font-size:18.50px;color:#e8e8e8;transform:scaleX(0.9500);'>H</div>
<div class=a style="left:1019.90px;top:278.00px;width:1.00px;height:22.60px;background:#4e4e4e;"></div>
<div class=t style='left:939.96px;top:279.45px;font-size:18.50px;color:#e8e8e8;transform:scaleX(0.9500);'>I</div>
<div class=a style="left:1175.80px;top:278.00px;width:1.00px;height:22.60px;background:#4e4e4e;"></div>
<div class=t style='left:1093.96px;top:279.45px;font-size:18.50px;color:#e8e8e8;transform:scaleX(0.9500);'>J</div>
<div class=a style="left:1331.60px;top:278.00px;width:1.00px;height:22.60px;background:#4e4e4e;"></div>
<div class=t style='left:1248.34px;top:279.45px;font-size:18.50px;color:#e8e8e8;transform:scaleX(0.9500);'>K</div>
<div class=a style="left:1487.90px;top:278.00px;width:1.00px;height:22.60px;background:#4e4e4e;"></div>
<div class=t style='left:1405.36px;top:279.45px;font-size:18.50px;color:#e8e8e8;transform:scaleX(0.9500);'>L</div>
<div class=a style="left:1643.70px;top:278.00px;width:1.00px;height:22.60px;background:#4e4e4e;"></div>
<div class=t style='left:1558.97px;top:279.45px;font-size:18.50px;color:#e8e8e8;transform:scaleX(0.9500);'>M</div>
<div class=a style="left:1800.00px;top:278.00px;width:1.00px;height:22.60px;background:#4e4e4e;"></div>
<div class=t style='left:1716.00px;top:279.45px;font-size:18.50px;color:#e8e8e8;transform:scaleX(0.9500);'>N</div>
<div class=a style="left:1827.50px;top:278.00px;width:1.00px;height:22.60px;background:#4e4e4e;"></div>
<div class=t style='left:1807.41px;top:279.45px;font-size:18.50px;color:#e8e8e8;transform:scaleX(0.9500);'>O</div>
<div class=a style="left:1920.00px;top:278.00px;width:1.00px;height:22.60px;background:#4e4e4e;"></div>
<div class=t style='left:1868.39px;top:279.45px;font-size:18.50px;color:#e8e8e8;transform:scaleX(0.9500);'>P</div>
<div class=a style="left:2043.90px;top:278.00px;width:1.00px;height:22.60px;background:#4e4e4e;"></div>
<div class=t style='left:1975.61px;top:279.45px;font-size:18.50px;color:#e8e8e8;transform:scaleX(0.9500);'>Q</div>
<div class=a style="left:2136.20px;top:278.00px;width:1.00px;height:22.60px;background:#4e4e4e;"></div>
<div class=t style='left:2084.20px;top:279.45px;font-size:18.50px;color:#e8e8e8;transform:scaleX(0.9500);'>R</div>
<div class=a style="left:2228.20px;top:278.00px;width:1.00px;height:22.60px;background:#4e4e4e;"></div>
<div class=t style='left:2176.84px;top:279.45px;font-size:18.50px;color:#e8e8e8;transform:scaleX(0.9500);'>S</div>
<div class=a style="left:2320.20px;top:278.00px;width:1.00px;height:22.60px;background:#4e4e4e;"></div>
<div class=t style='left:2269.33px;top:279.45px;font-size:18.50px;color:#e8e8e8;transform:scaleX(0.9500);'>T</div>
<div class=a style="left:2412.20px;top:278.00px;width:1.00px;height:22.60px;background:#4e4e4e;"></div>
<div class=t style='left:2360.35px;top:279.45px;font-size:18.50px;color:#e8e8e8;transform:scaleX(0.9500);'>U</div>
<div class=a style="left:2504.00px;top:278.00px;width:1.00px;height:22.60px;background:#4e4e4e;"></div>
<div class=t style='left:2452.74px;top:279.45px;font-size:18.50px;color:#e8e8e8;transform:scaleX(0.9500);'>V</div>
<div class=a style="left:2596.10px;top:278.00px;width:1.00px;height:22.60px;background:#4e4e4e;"></div>
<div class=t style='left:2542.25px;top:279.45px;font-size:18.50px;color:#e8e8e8;transform:scaleX(0.9500);'>W</div>
<div class=a style="left:2688.20px;top:278.00px;width:1.00px;height:22.60px;background:#4e4e4e;"></div>
<div class=t style='left:2636.79px;top:279.45px;font-size:18.50px;color:#e8e8e8;transform:scaleX(0.9500);'>X</div>
<div class=a style="left:2779.90px;top:278.00px;width:1.00px;height:22.60px;background:#4e4e4e;"></div>
<div class=t style='left:2728.69px;top:279.45px;font-size:18.50px;color:#e8e8e8;transform:scaleX(0.9500);'>Y</div>
<div class=t style='left:2821.03px;top:279.45px;font-size:18.50px;color:#e8e8e8;transform:scaleX(0.9500);'>Z</div>
<div class=a style="left:11.00px;top:300.60px;width:36.30px;height:1369.40px;background:#0a0a0a;"></div>
<div class=a style="left:11.00px;top:300.60px;width:36.30px;height:37.90px;background:#6b6b6b;"></div>
<div class=a style="left:46.00px;top:300.60px;width:1.50px;height:37.90px;background:#3c9a5a;"></div>
<div class=a style="left:11.00px;top:338.00px;width:36.30px;height:1.00px;background:#4e4e4e;"></div>
<div class=t style='left:24.28px;top:315.99px;font-size:19.00px;color:#e8e8e8;transform:scaleX(0.9300);'>1</div>
<div class=a style="left:11.00px;top:372.90px;width:36.30px;height:1.00px;background:#4e4e4e;"></div>
<div class=t style='left:24.28px;top:350.89px;font-size:19.00px;color:#e8e8e8;transform:scaleX(0.9300);'>2</div>
<div class=a style="left:11.00px;top:407.80px;width:36.30px;height:1.00px;background:#4e4e4e;"></div>
<div class=t style='left:24.28px;top:385.79px;font-size:19.00px;color:#e8e8e8;transform:scaleX(0.9300);'>3</div>
<div class=a style="left:11.00px;top:432.80px;width:36.30px;height:1.00px;background:#4e4e4e;"></div>
<div class=t style='left:24.28px;top:410.79px;font-size:19.00px;color:#e8e8e8;transform:scaleX(0.9300);'>4</div>
<div class=a style="left:11.00px;top:462.60px;width:36.30px;height:1.00px;background:#4e4e4e;"></div>
<div class=t style='left:24.28px;top:440.59px;font-size:19.00px;color:#e8e8e8;transform:scaleX(0.9300);'>5</div>
<div class=a style="left:11.00px;top:471.00px;width:36.30px;height:1.00px;background:#4e4e4e;"></div>
<div class=a style="left:11.00px;top:500.70px;width:36.30px;height:1.00px;background:#4e4e4e;"></div>
<div class=t style='left:24.28px;top:478.69px;font-size:19.00px;color:#e8e8e8;transform:scaleX(0.9300);'>7</div>
<div class=a style="left:11.00px;top:527.10px;width:36.30px;height:1.00px;background:#4e4e4e;"></div>
<div class=t style='left:24.28px;top:505.09px;font-size:19.00px;color:#e8e8e8;transform:scaleX(0.9300);'>8</div>
<div class=a style="left:11.00px;top:562.80px;width:36.30px;height:1.00px;background:#4e4e4e;"></div>
<div class=t style='left:24.28px;top:540.79px;font-size:19.00px;color:#e8e8e8;transform:scaleX(0.9300);'>9</div>
<div class=a style="left:11.00px;top:599.90px;width:36.30px;height:1.00px;background:#4e4e4e;"></div>
<div class=t style='left:19.37px;top:577.89px;font-size:19.00px;color:#e8e8e8;transform:scaleX(0.9300);'>10</div>
<div class=a style="left:11.00px;top:636.50px;width:36.30px;height:1.00px;background:#4e4e4e;"></div>
<div class=t style='left:20.02px;top:614.49px;font-size:19.00px;color:#e8e8e8;transform:scaleX(0.9300);'>11</div>
<div class=a style="left:11.00px;top:673.60px;width:36.30px;height:1.00px;background:#4e4e4e;"></div>
<div class=t style='left:19.37px;top:651.59px;font-size:19.00px;color:#e8e8e8;transform:scaleX(0.9300);'>12</div>
<div class=a style="left:11.00px;top:710.70px;width:36.30px;height:1.00px;background:#4e4e4e;"></div>
<div class=t style='left:19.37px;top:688.69px;font-size:19.00px;color:#e8e8e8;transform:scaleX(0.9300);'>13</div>
<div class=a style="left:11.00px;top:747.80px;width:36.30px;height:1.00px;background:#4e4e4e;"></div>
<div class=t style='left:19.37px;top:725.79px;font-size:19.00px;color:#e8e8e8;transform:scaleX(0.9300);'>14</div>
<div class=a style="left:11.00px;top:784.90px;width:36.30px;height:1.00px;background:#4e4e4e;"></div>
<div class=t style='left:19.37px;top:762.89px;font-size:19.00px;color:#e8e8e8;transform:scaleX(0.9300);'>15</div>
<div class=a style="left:11.00px;top:821.70px;width:36.30px;height:1.00px;background:#4e4e4e;"></div>
<div class=t style='left:19.37px;top:799.69px;font-size:19.00px;color:#e8e8e8;transform:scaleX(0.9300);'>16</div>
<div class=a style="left:11.00px;top:858.80px;width:36.30px;height:1.00px;background:#4e4e4e;"></div>
<div class=t style='left:19.37px;top:836.79px;font-size:19.00px;color:#e8e8e8;transform:scaleX(0.9300);'>17</div>
<div class=a style="left:11.00px;top:896.10px;width:36.30px;height:1.00px;background:#4e4e4e;"></div>
<div class=t style='left:19.37px;top:874.09px;font-size:19.00px;color:#e8e8e8;transform:scaleX(0.9300);'>18</div>
<div class=a style="left:11.00px;top:933.00px;width:36.30px;height:1.00px;background:#4e4e4e;"></div>
<div class=t style='left:19.37px;top:910.99px;font-size:19.00px;color:#e8e8e8;transform:scaleX(0.9300);'>19</div>
<div class=a style="left:11.00px;top:969.80px;width:36.30px;height:1.00px;background:#4e4e4e;"></div>
<div class=t style='left:19.37px;top:947.79px;font-size:19.00px;color:#e8e8e8;transform:scaleX(0.9300);'>20</div>
<div class=a style="left:11.00px;top:1006.50px;width:36.30px;height:1.00px;background:#4e4e4e;"></div>
<div class=t style='left:19.37px;top:984.49px;font-size:19.00px;color:#e8e8e8;transform:scaleX(0.9300);'>21</div>
<div class=a style="left:11.00px;top:1044.00px;width:36.30px;height:1.00px;background:#4e4e4e;"></div>
<div class=t style='left:19.37px;top:1021.99px;font-size:19.00px;color:#e8e8e8;transform:scaleX(0.9300);'>22</div>
<div class=a style="left:11.00px;top:1081.10px;width:36.30px;height:1.00px;background:#4e4e4e;"></div>
<div class=t style='left:19.37px;top:1059.09px;font-size:19.00px;color:#e8e8e8;transform:scaleX(0.9300);'>23</div>
<div class=a style="left:11.00px;top:1117.80px;width:36.30px;height:1.00px;background:#4e4e4e;"></div>
<div class=t style='left:19.37px;top:1095.79px;font-size:19.00px;color:#e8e8e8;transform:scaleX(0.9300);'>24</div>
<div class=a style="left:11.00px;top:1154.00px;width:36.30px;height:1.00px;background:#4e4e4e;"></div>
<div class=t style='left:19.37px;top:1131.99px;font-size:19.00px;color:#e8e8e8;transform:scaleX(0.9300);'>25</div>
<div class=a style="left:11.00px;top:1195.10px;width:36.30px;height:1.00px;background:#4e4e4e;"></div>
<div class=t style='left:19.37px;top:1173.09px;font-size:19.00px;color:#e8e8e8;transform:scaleX(0.9300);'>28</div>
<div class=a style="left:11.00px;top:1235.00px;width:36.30px;height:1.00px;background:#4e4e4e;"></div>
<div class=t style='left:19.37px;top:1212.99px;font-size:19.00px;color:#e8e8e8;transform:scaleX(0.9300);'>30</div>
<div class=a style="left:11.00px;top:1269.70px;width:36.30px;height:1.00px;background:#4e4e4e;"></div>
<div class=t style='left:19.37px;top:1247.69px;font-size:19.00px;color:#e8e8e8;transform:scaleX(0.9300);'>31</div>
<div class=a style="left:11.00px;top:1305.50px;width:36.30px;height:1.00px;background:#4e4e4e;"></div>
<div class=t style='left:19.37px;top:1283.49px;font-size:19.00px;color:#e8e8e8;transform:scaleX(0.9300);'>32</div>
<div class=a style="left:11.00px;top:1340.70px;width:36.30px;height:1.00px;background:#4e4e4e;"></div>
<div class=t style='left:19.37px;top:1318.69px;font-size:19.00px;color:#e8e8e8;transform:scaleX(0.9300);'>33</div>
<div class=a style="left:11.00px;top:1376.70px;width:36.30px;height:1.00px;background:#4e4e4e;"></div>
<div class=t style='left:19.37px;top:1354.69px;font-size:19.00px;color:#e8e8e8;transform:scaleX(0.9300);'>34</div>
<div class=a style="left:11.00px;top:1406.80px;width:36.30px;height:1.00px;background:#4e4e4e;"></div>
<div class=t style='left:19.37px;top:1384.79px;font-size:19.00px;color:#e8e8e8;transform:scaleX(0.9300);'>35</div>
<div class=a style="left:11.00px;top:1442.80px;width:36.30px;height:1.00px;background:#4e4e4e;"></div>
<div class=t style='left:19.37px;top:1420.79px;font-size:19.00px;color:#e8e8e8;transform:scaleX(0.9300);'>36</div>
<div class=a style="left:11.00px;top:1484.00px;width:36.30px;height:1.00px;background:#4e4e4e;"></div>
<div class=t style='left:19.37px;top:1461.99px;font-size:19.00px;color:#e8e8e8;transform:scaleX(0.9300);'>38</div>
<div class=a style="left:11.00px;top:1524.00px;width:36.30px;height:1.00px;background:#4e4e4e;"></div>
<div class=t style='left:19.37px;top:1501.99px;font-size:19.00px;color:#e8e8e8;transform:scaleX(0.9300);'>40</div>
<div class=a style="left:11.00px;top:1558.80px;width:36.30px;height:1.00px;background:#4e4e4e;"></div>
<div class=t style='left:19.37px;top:1536.79px;font-size:19.00px;color:#e8e8e8;transform:scaleX(0.9300);'>41</div>
<div class=a style="left:11.00px;top:1594.50px;width:36.30px;height:1.00px;background:#4e4e4e;"></div>
<div class=t style='left:19.37px;top:1572.49px;font-size:19.00px;color:#e8e8e8;transform:scaleX(0.9300);'>42</div>
<div class=a style="left:11.00px;top:1623.80px;width:36.30px;height:1.00px;background:#4e4e4e;"></div>
<div class=t style='left:19.37px;top:1601.79px;font-size:19.00px;color:#e8e8e8;transform:scaleX(0.9300);'>43</div>
<div class=a style="left:11.00px;top:1649.50px;width:36.30px;height:1.00px;background:#4e4e4e;"></div>
<div class=t style='left:19.37px;top:1627.49px;font-size:19.00px;color:#e8e8e8;transform:scaleX(0.9300);'>44</div>
<div class=a style="left:11.00px;top:1669.50px;width:36.30px;height:1.00px;background:#4e4e4e;"></div>
<div class=t style='left:19.37px;top:1650.99px;font-size:19.00px;color:#e8e8e8;transform:scaleX(0.9300);'>45</div>
<div class=a style='left:11px;top:463.6px;width:36.3px;height:7.4px;overflow:hidden;background:#0a0a0a'><div class=t style='left:12px;top:-4px;font-size:19px;color:#e8e8e8;transform:scaleX(0.93)'>6</div></div>
<div class=a style="left:11.00px;top:1157.00px;width:36.30px;height:1.00px;background:#4e4e4e;"></div>
<div class=a style="left:11.00px;top:1445.80px;width:36.30px;height:1.00px;background:#4e4e4e;"></div>
<div class=a style="left:11.00px;top:1487.00px;width:36.30px;height:1.00px;background:#4e4e4e;"></div>
<div class=a style="left:47.30px;top:432.80px;width:2813.70px;height:1.00px;background:#a6a6a6;"></div>
<div class=t style='left:80.20px;top:300.64px;font-size:35.00px;color:#1f1f1f;font-weight:700;transform:scaleX(1.0268);-webkit-text-stroke:1.05px #1f1f1f;'>Returns on Invested Capital</div>
<div class=t style='left:79.00px;top:339.84px;font-size:28.60px;color:#000;font-weight:700;transform:scaleX(1.0405);-webkit-text-stroke:0.86px #000;'>ABC Company Inc.</div>
<div class=t style='left:76.50px;top:379.47px;font-size:20.00px;color:#2f7de3;font-weight:700;transform:scaleX(1.0059);-webkit-text-stroke:0.60px #2f7de3;'>Go to Table of Contents</div>
<div class=a style="left:76.50px;top:398.60px;width:226.50px;height:1.60px;background:#2f7de3;"></div>
<div class=a style="left:72.10px;top:434.00px;width:480.90px;height:29.50px;background:#4b50d1;"></div>
<div class=a style="left:72.10px;top:471.20px;width:480.90px;height:30.40px;background:#4bb1e7;"></div>
<div class=t style='left:211.15px;top:434.72px;font-size:24.50px;color:#fff;font-weight:700;transform:scaleX(1.0130);-webkit-text-stroke:0.73px #fff;'>Years to payback</div>
<div class=t style='left:294.65px;top:471.92px;font-size:24.50px;color:#fff;font-weight:700;transform:scaleX(1.0510);-webkit-text-stroke:0.73px #fff;'>2.3</div>
<div class=a style="left:708.30px;top:434.00px;width:468.20px;height:29.50px;background:#4b50d1;"></div>
<div class=a style="left:708.30px;top:471.20px;width:468.20px;height:30.40px;background:#4bb1e7;"></div>
<div class=t style='left:758.40px;top:434.72px;font-size:24.50px;color:#fff;font-weight:700;transform:scaleX(1.0462);-webkit-text-stroke:0.73px #fff;'>5-Year Cash Generated ($'000)</div>
<div class=t style='left:909.05px;top:471.92px;font-size:24.50px;color:#fff;font-weight:700;transform:scaleX(1.0879);-webkit-text-stroke:0.73px #fff;'>5,065</div>
<div class=a style="left:1332.20px;top:434.00px;width:468.80px;height:29.50px;background:#4b50d1;"></div>
<div class=a style="left:1332.20px;top:471.20px;width:468.80px;height:30.40px;background:#4bb1e7;"></div>
<div class=t style='left:1493.55px;top:434.72px;font-size:24.50px;color:#fff;font-weight:700;transform:scaleX(1.0623);-webkit-text-stroke:0.73px #fff;'>ROIC - 2030</div>
<div class=t style='left:1526.55px;top:471.92px;font-size:24.50px;color:#fff;font-weight:700;transform:scaleX(1.1530);-webkit-text-stroke:0.73px #fff;'>50.1%</div>
<div class=a style="left:72.10px;top:527.40px;width:1728.40px;height:36.10px;background:#4b50d1;"></div>
<div class=t style='left:630.20px;top:529.86px;font-size:28.80px;color:#fff;font-weight:700;transform:scaleX(1.0891);-webkit-text-stroke:0.86px #fff;'>Returns on Invested Capital Chart ($'000)</div>
<div class=a style="left:72.10px;top:1118.00px;width:1728.40px;height:36.70px;background:#4b50d1;"></div>
<div class=t style='left:671.20px;top:1120.51px;font-size:29.50px;color:#fff;font-weight:700;transform:scaleX(1.0656);-webkit-text-stroke:0.89px #fff;'>Returns on Invested Capital ($'000)</div>
<div class=a style="left:73.00px;top:1160.00px;width:1727.50px;height:35.00px;background:#6c72e6;"></div>
<div class=a style="left:1019.40px;top:1160.00px;width:2.00px;height:35.00px;background:#ffffff;"></div>
<div class=a style="left:1175.30px;top:1160.00px;width:2.00px;height:35.00px;background:#ffffff;"></div>
<div class=a style="left:1331.10px;top:1160.00px;width:2.00px;height:35.00px;background:#ffffff;"></div>
<div class=a style="left:1487.40px;top:1160.00px;width:2.00px;height:35.00px;background:#ffffff;"></div>
<div class=a style="left:1643.20px;top:1160.00px;width:2.00px;height:35.00px;background:#ffffff;"></div>
<div class=t style='left:85.00px;top:1166.41px;font-size:20.50px;color:#fff;font-weight:700;transform:scaleX(0.9629);-webkit-text-stroke:0.61px #fff;'>Fiscal Year</div>
<div class=t style='left:1074.75px;top:1166.41px;font-size:20.50px;color:#fff;font-weight:700;transform:scaleX(1.0349);-webkit-text-stroke:0.61px #fff;'>2026</div>
<div class=t style='left:1230.60px;top:1166.41px;font-size:20.50px;color:#fff;font-weight:700;transform:scaleX(1.0349);-webkit-text-stroke:0.61px #fff;'>2027</div>
<div class=t style='left:1386.65px;top:1166.41px;font-size:20.50px;color:#fff;font-weight:700;transform:scaleX(1.0349);-webkit-text-stroke:0.61px #fff;'>2028</div>
<div class=t style='left:1542.70px;top:1166.41px;font-size:20.50px;color:#fff;font-weight:700;transform:scaleX(1.0349);-webkit-text-stroke:0.61px #fff;'>2029</div>
<div class=t style='left:1698.75px;top:1166.41px;font-size:20.50px;color:#fff;font-weight:700;transform:scaleX(1.0349);-webkit-text-stroke:0.61px #fff;'>2030</div>
<div class=t style='left:94.90px;top:1208.15px;font-size:18.50px;color:#111;transform:scaleX(0.9787);'>Debts</div>
<div class=t style='left:1136.56px;top:1207.87px;font-size:18.80px;color:#111;transform:scaleX(0.9200);'>283</div>
<div class=t style='left:1292.36px;top:1207.87px;font-size:18.80px;color:#111;transform:scaleX(0.9200);'>237</div>
<div class=t style='left:1448.66px;top:1207.87px;font-size:18.80px;color:#111;transform:scaleX(0.9200);'>190</div>
<div class=t style='left:1604.46px;top:1207.87px;font-size:18.80px;color:#111;transform:scaleX(0.9200);'>141</div>
<div class=t style='left:1770.38px;top:1207.87px;font-size:18.80px;color:#111;transform:scaleX(0.9200);'>90</div>
<div class=t style='left:94.90px;top:1242.75px;font-size:18.50px;color:#111;transform:scaleX(0.9918);'>Equity</div>
<div class=t style='left:1136.56px;top:1242.47px;font-size:18.80px;color:#111;transform:scaleX(0.9200);'>635</div>
<div class=t style='left:1276.55px;top:1242.47px;font-size:18.80px;color:#111;transform:scaleX(0.9500);'>1,041</div>
<div class=t style='left:1432.85px;top:1242.47px;font-size:18.80px;color:#111;transform:scaleX(0.9500);'>2,006</div>
<div class=t style='left:1588.65px;top:1242.47px;font-size:18.80px;color:#111;transform:scaleX(0.9500);'>3,731</div>
<div class=t style='left:1744.95px;top:1242.47px;font-size:18.80px;color:#111;transform:scaleX(0.9500);'>6,293</div>
<div class=a style="left:72.10px;top:1270.30px;width:1728.40px;height:35.70px;background:#4bb1e7;"></div>
<div class=t style='left:77.70px;top:1275.06px;font-size:22.50px;color:#fff;font-weight:700;transform:scaleX(1.0494);-webkit-text-stroke:0.67px #fff;'>Total Invested Capital</div>
<div class=t style='left:1128.62px;top:1277.37px;font-size:20.00px;color:#fff;font-weight:700;transform:scaleX(1.0600);-webkit-text-stroke:0.60px #fff;'>918</div>
<div class=t style='left:1266.73px;top:1277.37px;font-size:20.00px;color:#fff;font-weight:700;transform:scaleX(1.0600);-webkit-text-stroke:0.60px #fff;'>1,278</div>
<div class=t style='left:1423.03px;top:1277.37px;font-size:20.00px;color:#fff;font-weight:700;transform:scaleX(1.0600);-webkit-text-stroke:0.60px #fff;'>2,196</div>
<div class=t style='left:1578.83px;top:1277.37px;font-size:20.00px;color:#fff;font-weight:700;transform:scaleX(1.0600);-webkit-text-stroke:0.60px #fff;'>3,872</div>
<div class=t style='left:1735.13px;top:1277.37px;font-size:20.00px;color:#fff;font-weight:700;transform:scaleX(1.0600);-webkit-text-stroke:0.60px #fff;'>6,383</div>
<div class=t style='left:94.90px;top:1314.15px;font-size:18.50px;color:#111;transform:scaleX(1.0228);'>Net Operating Profit After Tax (NOPAT)</div>
<div class=t style='left:1139.59px;top:1313.87px;font-size:18.80px;color:#111;'>(35)</div>
<div class=t style='left:1292.36px;top:1313.87px;font-size:18.80px;color:#111;transform:scaleX(0.9200);'>419</div>
<div class=t style='left:1448.66px;top:1313.87px;font-size:18.80px;color:#111;transform:scaleX(0.9200);'>976</div>
<div class=t style='left:1588.65px;top:1313.87px;font-size:18.80px;color:#111;transform:scaleX(0.9500);'>1,733</div>
<div class=t style='left:1744.95px;top:1313.87px;font-size:18.80px;color:#111;transform:scaleX(0.9500);'>2,567</div>
<div class=a style="left:72.10px;top:1341.20px;width:1728.40px;height:36.30px;background:#4bb1e7;"></div>
<div class=t style='left:77.70px;top:1346.26px;font-size:22.50px;color:#fff;font-weight:700;transform:scaleX(1.0329);-webkit-text-stroke:0.67px #fff;'>ROIC</div>
<div class=t style='left:1112.31px;top:1348.57px;font-size:20.00px;color:#fff;font-weight:700;transform:scaleX(1.1500);-webkit-text-stroke:0.60px #fff;'>-3.8%</div>
<div class=t style='left:1262.97px;top:1348.57px;font-size:20.00px;color:#fff;font-weight:700;transform:scaleX(1.1500);-webkit-text-stroke:0.60px #fff;'>38.1%</div>
<div class=t style='left:1419.27px;top:1348.57px;font-size:20.00px;color:#fff;font-weight:700;transform:scaleX(1.1500);-webkit-text-stroke:0.60px #fff;'>56.2%</div>
<div class=t style='left:1575.07px;top:1348.57px;font-size:20.00px;color:#fff;font-weight:700;transform:scaleX(1.1500);-webkit-text-stroke:0.60px #fff;'>57.1%</div>
<div class=t style='left:1731.37px;top:1348.57px;font-size:20.00px;color:#fff;font-weight:700;transform:scaleX(1.1500);-webkit-text-stroke:0.60px #fff;'>50.1%</div>
<div class=a style="left:72.10px;top:1407.00px;width:1728.40px;height:36.30px;background:#4b50d1;"></div>
<div class=t style='left:698.75px;top:1409.31px;font-size:29.50px;color:#fff;font-weight:700;transform:scaleX(1.0398);-webkit-text-stroke:0.89px #fff;'>Payback Period Analysis ($'000)</div>
<div class=a style="left:73.00px;top:1449.30px;width:1727.50px;height:34.00px;background:#6c72e6;"></div>
<div class=a style="left:1019.40px;top:1449.30px;width:2.00px;height:34.00px;background:#ffffff;"></div>
<div class=a style="left:1175.30px;top:1449.30px;width:2.00px;height:34.00px;background:#ffffff;"></div>
<div class=a style="left:1331.10px;top:1449.30px;width:2.00px;height:34.00px;background:#ffffff;"></div>
<div class=a style="left:1487.40px;top:1449.30px;width:2.00px;height:34.00px;background:#ffffff;"></div>
<div class=a style="left:1643.20px;top:1449.30px;width:2.00px;height:34.00px;background:#ffffff;"></div>
<div class=t style='left:85.00px;top:1455.71px;font-size:20.50px;color:#fff;font-weight:700;transform:scaleX(0.9629);-webkit-text-stroke:0.61px #fff;'>Fiscal Year</div>
<div class=t style='left:1074.75px;top:1455.71px;font-size:20.50px;color:#fff;font-weight:700;transform:scaleX(1.0349);-webkit-text-stroke:0.61px #fff;'>2026</div>
<div class=t style='left:1230.60px;top:1455.71px;font-size:20.50px;color:#fff;font-weight:700;transform:scaleX(1.0349);-webkit-text-stroke:0.61px #fff;'>2027</div>
<div class=t style='left:1386.65px;top:1455.71px;font-size:20.50px;color:#fff;font-weight:700;transform:scaleX(1.0349);-webkit-text-stroke:0.61px #fff;'>2028</div>
<div class=t style='left:1542.70px;top:1455.71px;font-size:20.50px;color:#fff;font-weight:700;transform:scaleX(1.0349);-webkit-text-stroke:0.61px #fff;'>2029</div>
<div class=t style='left:1698.75px;top:1455.71px;font-size:20.50px;color:#fff;font-weight:700;transform:scaleX(1.0349);-webkit-text-stroke:0.61px #fff;'>2030</div>
<div class=t style='left:94.90px;top:1497.45px;font-size:18.50px;color:#111;transform:scaleX(1.0326);'>Net Profit After Tax</div>
<div class=t style='left:1139.59px;top:1497.17px;font-size:18.80px;color:#111;'>(35)</div>
<div class=t style='left:1292.36px;top:1497.17px;font-size:18.80px;color:#111;transform:scaleX(0.9200);'>419</div>
<div class=t style='left:1448.66px;top:1497.17px;font-size:18.80px;color:#111;transform:scaleX(0.9200);'>976</div>
<div class=t style='left:1588.65px;top:1497.17px;font-size:18.80px;color:#111;transform:scaleX(0.9500);'>1,733</div>
<div class=t style='left:1744.95px;top:1497.17px;font-size:18.80px;color:#111;transform:scaleX(0.9500);'>2,567</div>
<div class=t style='left:94.90px;top:1532.15px;font-size:18.50px;color:#111;transform:scaleX(0.8419);'>CAPEX</div>
<div class=t style='left:1129.14px;top:1531.87px;font-size:18.80px;color:#111;'>(595)</div>
<div class=t style='left:1314.34px;top:1531.87px;font-size:18.80px;color:#111;transform:scaleX(0.9200);'>-</div>
<div class=t style='left:1470.64px;top:1531.87px;font-size:18.80px;color:#111;transform:scaleX(0.9200);'>-</div>
<div class=t style='left:1626.44px;top:1531.87px;font-size:18.80px;color:#111;transform:scaleX(0.9200);'>-</div>
<div class=t style='left:1782.74px;top:1531.87px;font-size:18.80px;color:#111;transform:scaleX(0.9200);'>-</div>
<div class=a style="left:72.10px;top:1559.00px;width:1728.40px;height:35.90px;background:#4bb1e7;"></div>
<div class=t style='left:77.90px;top:1564.70px;font-size:21.70px;color:#fff;font-weight:700;transform:scaleX(1.0652);-webkit-text-stroke:0.65px #fff;'>Cumulative Cash Generated (Spent)</div>
<div class=t style='left:1120.23px;top:1566.27px;font-size:20.00px;color:#fff;font-weight:700;transform:scaleX(1.1300);-webkit-text-stroke:0.60px #fff;'>(630)</div>
<div class=t style='left:1277.28px;top:1566.27px;font-size:20.00px;color:#fff;font-weight:700;transform:scaleX(1.1300);-webkit-text-stroke:0.60px #fff;'>(211)</div>
<div class=t style='left:1440.72px;top:1566.27px;font-size:20.00px;color:#fff;font-weight:700;transform:scaleX(1.0600);-webkit-text-stroke:0.60px #fff;'>765</div>
<div class=t style='left:1578.83px;top:1566.27px;font-size:20.00px;color:#fff;font-weight:700;transform:scaleX(1.0600);-webkit-text-stroke:0.60px #fff;'>2,498</div>
<div class=t style='left:1735.13px;top:1566.27px;font-size:20.00px;color:#fff;font-weight:700;transform:scaleX(1.0600);-webkit-text-stroke:0.60px #fff;'>5,065</div>
<div class=t style='left:77.20px;top:1599.29px;font-size:19.00px;color:#1a1a1a;font-weight:700;transform:scaleX(1.0140);-webkit-text-stroke:0.57px #1a1a1a;'>Payback year</div>
<div class=a style="left:1332.10px;top:1596.30px;width:156.30px;height:28.30px;background:#2db3a3;"></div>
<div class=t style='left:1095.01px;top:1598.57px;font-size:20.00px;color:#1a1a1a;font-weight:700;-webkit-text-stroke:0.60px #1a1a1a;'>-</div>
<div class=t style='left:1250.86px;top:1598.57px;font-size:20.00px;color:#1a1a1a;font-weight:700;-webkit-text-stroke:0.60px #1a1a1a;'>-</div>
<div class=t style='left:1404.69px;top:1598.57px;font-size:20.00px;color:#1a1a1a;font-weight:700;-webkit-text-stroke:0.60px #1a1a1a;'>1</div>
<div class=t style='left:1562.96px;top:1598.57px;font-size:20.00px;color:#1a1a1a;font-weight:700;-webkit-text-stroke:0.60px #1a1a1a;'>-</div>
<div class=t style='left:1719.01px;top:1598.57px;font-size:20.00px;color:#1a1a1a;font-weight:700;-webkit-text-stroke:0.60px #1a1a1a;'>-</div>
<svg class=a style='left:0;top:0' width='2902' height='1762' viewBox='0 0 2902 1762'><rect x='211.6' y='663.85' width='1588.70' height='1.3' fill='#72b2cf'/><rect x='211.6' y='707.90' width='1588.70' height='1.3' fill='#72b2cf'/><rect x='211.6' y='751.95' width='1588.70' height='1.3' fill='#72b2cf'/><rect x='211.6' y='796.00' width='1588.70' height='1.3' fill='#72b2cf'/><rect x='211.6' y='840.05' width='1588.70' height='1.3' fill='#72b2cf'/><rect x='211.6' y='884.10' width='1588.70' height='1.3' fill='#72b2cf'/><rect x='211.6' y='928.15' width='1588.70' height='1.3' fill='#72b2cf'/><rect x='211.6' y='1016.25' width='1588.70' height='1.3' fill='#72b2cf'/><rect x='249.07' y='932.36' width='121.4' height='40.44' fill='#4bb1e7'/><rect x='370.47' y='972.80' width='121.4' height='1.54' fill='#f07b6e'/><rect x='566.81' y='916.50' width='121.4' height='56.30' fill='#4bb1e7'/><rect x='688.21' y='954.34' width='121.4' height='18.46' fill='#f07b6e'/><rect x='884.55' y='876.07' width='121.4' height='96.73' fill='#4bb1e7'/><rect x='1005.95' y='929.81' width='121.4' height='42.99' fill='#f07b6e'/><rect x='1202.29' y='802.24' width='121.4' height='170.56' fill='#4bb1e7'/><rect x='1323.69' y='896.46' width='121.4' height='76.34' fill='#f07b6e'/><rect x='1520.03' y='691.63' width='121.4' height='281.17' fill='#4bb1e7'/><rect x='1641.43' y='859.72' width='121.4' height='113.08' fill='#f07b6e'/><rect x='211.1' y='972.00' width='1589.70' height='2' fill='#4f9dc9'/><rect x='210.60' y='972.80' width='2' height='7' fill='#4f9dc9'/><rect x='528.34' y='972.80' width='2' height='7' fill='#4f9dc9'/><rect x='846.08' y='972.80' width='2' height='7' fill='#4f9dc9'/><rect x='1163.82' y='972.80' width='2' height='7' fill='#4f9dc9'/><rect x='1481.56' y='972.80' width='2' height='7' fill='#4f9dc9'/><rect x='1799.30' y='972.80' width='2' height='7' fill='#4f9dc9'/><path d='M370.47 989.54 L688.21 804.97 L1005.95 725.24 L1323.69 721.27 L1641.43 752.11' stroke='#2db5a4' stroke-width='5' fill='none' stroke-linejoin='round'/><circle cx='370.47' cy='989.54' r='39' fill='#2db5a4'/><circle cx='688.21' cy='804.97' r='39' fill='#2db5a4'/><circle cx='1005.95' cy='725.24' r='39' fill='#2db5a4'/><circle cx='1323.69' cy='721.27' r='39' fill='#2db5a4'/><circle cx='1641.43' cy='752.11' r='39' fill='#2db5a4'/><rect x='278' y='596.2' width='45.7' height='12.5' fill='#4bb1e7'/><rect x='775.1' y='596.3' width='45.8' height='12.4' fill='#f07b6e'/><path d='M1481 602 H1526.5' stroke='#2db5a4' stroke-width='3.6' stroke-linecap='round'/><circle cx='1502.5' cy='602' r='6.5' fill='#2db5a4'/></svg>
<div class=t style='left:329.50px;top:586.58px;font-size:25.20px;color:#000;font-weight:700;transform:scaleX(1.0233);-webkit-text-stroke:0.76px #000;'>Total Invested Capital</div>
<div class=t style='left:827.70px;top:586.48px;font-size:25.20px;color:#000;font-weight:700;transform:scaleX(1.0242);-webkit-text-stroke:0.76px #000;'>Net Operating Profit After Tax (NOPAT)</div>
<div class=t style='left:1533.00px;top:586.68px;font-size:25.20px;color:#000;font-weight:700;transform:scaleX(0.9910);-webkit-text-stroke:0.76px #000;'>ROIC</div>
<div class=t style='left:132.53px;top:653.02px;font-size:20.00px;color:#000;font-weight:700;transform:scaleX(1.0800);-webkit-text-stroke:0.60px #000;'>7,000</div>
<div class=t style='left:132.53px;top:697.07px;font-size:20.00px;color:#000;font-weight:700;transform:scaleX(1.0800);-webkit-text-stroke:0.60px #000;'>6,000</div>
<div class=t style='left:132.53px;top:741.12px;font-size:20.00px;color:#000;font-weight:700;transform:scaleX(1.0800);-webkit-text-stroke:0.60px #000;'>5,000</div>
<div class=t style='left:132.53px;top:785.17px;font-size:20.00px;color:#000;font-weight:700;transform:scaleX(1.0800);-webkit-text-stroke:0.60px #000;'>4,000</div>
<div class=t style='left:132.53px;top:829.22px;font-size:20.00px;color:#000;font-weight:700;transform:scaleX(1.0800);-webkit-text-stroke:0.60px #000;'>3,000</div>
<div class=t style='left:132.53px;top:873.27px;font-size:20.00px;color:#000;font-weight:700;transform:scaleX(1.0800);-webkit-text-stroke:0.60px #000;'>2,000</div>
<div class=t style='left:132.53px;top:917.32px;font-size:20.00px;color:#000;font-weight:700;transform:scaleX(1.0800);-webkit-text-stroke:0.60px #000;'>1,000</div>
<div class=t style='left:181.33px;top:960.37px;font-size:20.00px;color:#000;font-weight:700;-webkit-text-stroke:0.60px #000;'>-</div>
<div class=t style='left:121.70px;top:1005.42px;font-size:20.00px;color:#000;font-weight:700;transform:scaleX(1.1266);-webkit-text-stroke:0.60px #000;'>(1,000)</div>
<div class=t style='left:342.87px;top:1068.72px;font-size:22.00px;color:#000;font-weight:700;transform:scaleX(1.1276);-webkit-text-stroke:0.66px #000;'>2026</div>
<div class=t style='left:660.61px;top:1068.72px;font-size:22.00px;color:#000;font-weight:700;transform:scaleX(1.1276);-webkit-text-stroke:0.66px #000;'>2027</div>
<div class=t style='left:978.35px;top:1068.72px;font-size:22.00px;color:#000;font-weight:700;transform:scaleX(1.1276);-webkit-text-stroke:0.66px #000;'>2028</div>
<div class=t style='left:1296.09px;top:1068.72px;font-size:22.00px;color:#000;font-weight:700;transform:scaleX(1.1276);-webkit-text-stroke:0.66px #000;'>2029</div>
<div class=t style='left:1613.83px;top:1068.72px;font-size:22.00px;color:#000;font-weight:700;transform:scaleX(1.1276);-webkit-text-stroke:0.66px #000;'>2030</div>
<div class=t style='left:340.21px;top:978.15px;font-size:20.50px;color:#fff;font-weight:700;transform:scaleX(1.1300);-webkit-text-stroke:0.61px #fff;'>-3.8%</div>
<div class=t style='left:655.36px;top:793.58px;font-size:20.50px;color:#fff;font-weight:700;transform:scaleX(1.1300);-webkit-text-stroke:0.61px #fff;'>38.1%</div>
<div class=t style='left:973.10px;top:713.85px;font-size:20.50px;color:#fff;font-weight:700;transform:scaleX(1.1300);-webkit-text-stroke:0.61px #fff;'>56.2%</div>
<div class=t style='left:1290.84px;top:709.88px;font-size:20.50px;color:#fff;font-weight:700;transform:scaleX(1.1300);-webkit-text-stroke:0.61px #fff;'>57.1%</div>
<div class=t style='left:1608.58px;top:740.72px;font-size:20.50px;color:#fff;font-weight:700;transform:scaleX(1.1300);-webkit-text-stroke:0.61px #fff;'>50.1%</div>
<div class=a style="left:2863.50px;top:279.00px;width:25.50px;height:1391.00px;background:#171717;border-radius:13px;"></div>
<svg class=a style="left:2867.00px;top:285.00px;" width="17" height="12" viewBox="0 0 17 12"><path d='M8.5 1 L16 11 H1 Z' fill='#9c9c9c' stroke='#9c9c9c' stroke-width='1.5' stroke-linejoin='round'/></svg>
<div class=a style="left:2869.80px;top:303.60px;width:12.00px;height:1336.40px;background:#9c9c9c;border-radius:6px;"></div>
<svg class=a style="left:2867.00px;top:1653.00px;" width="17" height="12" viewBox="0 0 17 12"><path d='M8.5 11 L16 1 H1 Z' fill='#9c9c9c' stroke='#9c9c9c' stroke-width='1.5' stroke-linejoin='round'/></svg>
<svg class=a style="left:44.00px;top:1684.00px;" width="13" height="18" viewBox="0 0 13 18"><path d='M10.5 1.5 L3 9 L10.5 16.5' stroke='#bdbdbd' stroke-width='1.6' fill='none'/></svg>
<svg class=a style="left:92.00px;top:1684.00px;" width="13" height="18" viewBox="0 0 13 18"><path d='M2.5 1.5 L10 9 L2.5 16.5' stroke='#d8d8d8' stroke-width='1.6' fill='none'/></svg>
<div class=t style='left:190.00px;top:1683.55px;font-size:21.00px;color:#f2f2f2;transform:scaleX(0.9755);'>Contents</div>
<div class=a style="left:292.00px;top:1680.00px;width:1.20px;height:28.00px;background:#6e6e6e;"></div>
<div class=a style="left:433.50px;top:1680.00px;width:1.20px;height:28.00px;background:#6e6e6e;"></div>
<div class=a style="left:552.10px;top:1680.00px;width:1.20px;height:28.00px;background:#6e6e6e;"></div>
<div class=a style="left:723.00px;top:1680.00px;width:1.20px;height:28.00px;background:#6e6e6e;"></div>
<div class=a style="left:824.80px;top:1680.00px;width:1.20px;height:28.00px;background:#6e6e6e;"></div>
<div class=a style="left:924.50px;top:1680.00px;width:1.20px;height:28.00px;background:#6e6e6e;"></div>
<div class=a style="left:1051.10px;top:1680.00px;width:1.20px;height:28.00px;background:#6e6e6e;"></div>
<div class=a style="left:1154.00px;top:1680.00px;width:1.20px;height:28.00px;background:#6e6e6e;"></div>
<div class=a style="left:1208.90px;top:1680.00px;width:1.20px;height:28.00px;background:#6e6e6e;"></div>
<div class=a style="left:1270.00px;top:1680.00px;width:1.20px;height:28.00px;background:#6e6e6e;"></div>
<div class=a style="left:1330.30px;top:1680.00px;width:1.20px;height:28.00px;background:#6e6e6e;"></div>
<div class=a style="left:1459.20px;top:1680.00px;width:1.20px;height:28.00px;background:#6e6e6e;"></div>
<div class=a style="left:1587.50px;top:1680.00px;width:1.20px;height:28.00px;background:#6e6e6e;"></div>
<div class=a style="left:1714.10px;top:1680.00px;width:1.20px;height:28.00px;background:#6e6e6e;"></div>
<div class=a style="left:1774.80px;top:1680.00px;width:1.20px;height:28.00px;background:#6e6e6e;"></div>
<div class=a style="left:1860.20px;top:1680.00px;width:1.20px;height:28.00px;background:#6e6e6e;"></div>
<div class=a style="left:1958.30px;top:1680.00px;width:1.20px;height:28.00px;background:#6e6e6e;"></div>
<div class=a style="left:2035.50px;top:1680.00px;width:1.20px;height:28.00px;background:#6e6e6e;"></div>
<div class=a style="left:299.00px;top:1676.00px;width:127.30px;height:35.80px;background:#fbe46a;border-radius:7px;"></div>
<div class=t style='left:312.75px;top:1683.55px;font-size:21.00px;color:#0b1622;transform:scaleX(0.9714);'>Dashboard</div>
<div class=a style="left:440.00px;top:1676.00px;width:105.50px;height:35.80px;background:#fbe46a;border-radius:7px;"></div>
<div class=t style='left:453.75px;top:1683.55px;font-size:21.00px;color:#0b1622;transform:scaleX(0.9279);'>Revenue</div>
<div class=a style="left:559.00px;top:1676.00px;width:157.60px;height:35.80px;background:#fbe46a;border-radius:7px;"></div>
<div class=t style='left:572.75px;top:1683.55px;font-size:21.00px;color:#0b1622;transform:scaleX(0.8919);'>COGS &amp; OPEX</div>
<div class=a style="left:729.90px;top:1676.00px;width:88.90px;height:35.80px;background:#fbe46a;border-radius:7px;"></div>
<div class=t style='left:743.65px;top:1683.55px;font-size:21.00px;color:#0b1622;transform:scaleX(0.9563);'>Payroll</div>
<div class=a style="left:832.00px;top:1676.00px;width:86.50px;height:35.80px;background:#fbe46a;border-radius:7px;"></div>
<div class=t style='left:845.75px;top:1683.55px;font-size:21.00px;color:#0b1622;transform:scaleX(0.8286);'>CAPEX</div>
<div class=a style="left:932.00px;top:1676.00px;width:112.50px;height:35.80px;background:#fbe46a;border-radius:7px;"></div>
<div class=t style='left:945.75px;top:1683.55px;font-size:21.00px;color:#0b1622;transform:scaleX(0.9579);'>CapTable</div>
<div class=a style="left:1058.00px;top:1676.00px;width:89.40px;height:35.80px;background:#fbe46a;border-radius:7px;"></div>
<div class=t style='left:1071.75px;top:1683.55px;font-size:21.00px;color:#0b1622;transform:scaleX(0.9468);'>Capital</div>
<div class=a style="left:1161.00px;top:1676.00px;width:42.00px;height:35.80px;background:#4db5ec;border-radius:7px;"></div>
<div class=t style='left:1174.75px;top:1683.55px;font-size:21.00px;color:#0b1622;transform:scaleX(0.7307);'>IS</div>
<div class=a style="left:1216.00px;top:1676.00px;width:48.00px;height:35.80px;background:#4db5ec;border-radius:7px;"></div>
<div class=t style='left:1229.75px;top:1683.55px;font-size:21.00px;color:#0b1622;transform:scaleX(0.7321);'>CF</div>
<div class=a style="left:1277.30px;top:1676.00px;width:46.70px;height:35.80px;background:#4db5ec;border-radius:7px;"></div>
<div class=t style='left:1291.05px;top:1683.55px;font-size:21.00px;color:#0b1622;transform:scaleX(0.6853);'>BS</div>
<div class=a style="left:1338.00px;top:1676.00px;width:114.60px;height:35.80px;background:#4db5ec;border-radius:7px;"></div>
<div class=t style='left:1351.75px;top:1683.55px;font-size:21.00px;color:#0b1622;transform:scaleX(0.9326);'>Scenarios</div>
<div class=a style="left:1466.20px;top:1676.00px;width:114.30px;height:35.80px;background:#4db5ec;border-radius:7px;"></div>
<div class=t style='left:1479.95px;top:1683.55px;font-size:21.00px;color:#0b1622;transform:scaleX(1.0091);'>Valuation</div>
<div class=a style="left:1594.50px;top:1676.00px;width:113.00px;height:35.80px;background:#4db5ec;border-radius:7px;"></div>
<div class=t style='left:1608.25px;top:1683.55px;font-size:21.00px;color:#0b1622;transform:scaleX(0.9515);'>Summary</div>
<div class=a style="left:1721.00px;top:1676.00px;width:47.80px;height:35.80px;background:#4db5ec;border-radius:7px;"></div>
<div class=t style='left:1734.75px;top:1683.55px;font-size:21.00px;color:#0b1622;transform:scaleX(0.7246);'>BE</div>
<div class=a style="left:1867.20px;top:1676.00px;width:84.40px;height:35.80px;background:#4db5ec;border-radius:7px;"></div>
<div class=t style='left:1880.95px;top:1683.55px;font-size:21.00px;color:#0b1622;transform:scaleX(0.9198);'>Charts</div>
<div class=a style="left:1965.30px;top:1676.00px;width:63.30px;height:35.80px;background:#4db5ec;border-radius:7px;"></div>
<div class=t style='left:1979.05px;top:1683.55px;font-size:21.00px;color:#0b1622;transform:scaleX(0.8070);'>KPIs</div>
<div class=a style='left:2042.5px;top:1676px;width:29.3px;height:35.8px;overflow:hidden;'><div style='position:absolute;left:0;top:0;width:80px;height:35.8px;background:#4db5ec;border-radius:7px;'></div><div class=t style='left:14px;top:7.55px;font-size:21px;color:#0b1622;transform:scaleX(0.93)'>Scenarios</div></div>
<svg class=a style='left:1772px;top:1669px' width='92' height='44' viewBox='0 0 92 44'>
      <defs><linearGradient id='rg' x1='0' y1='0' x2='0' y2='1'><stop offset='0' stop-color='#ffffff'/><stop offset='0.2' stop-color='#ffffff'/><stop offset='1' stop-color='#b8def4'/></linearGradient></defs>
      <path d='M0 1 Q9.8 1 9.8 12 V35 Q9.8 42.3 17 42.3 H75 Q82.2 42.3 82.2 35 V12 Q82.2 1 92 1 V0 H0 Z' fill='url(#rg)'/>
      <rect x='0' y='0' width='92' height='1.6' fill='#ffffff'/></svg>
<div class=t style='left:1794.75px;top:1678.79px;font-size:20.30px;color:#151a22;transform:scaleX(0.9171);-webkit-text-stroke:0.3px #151a22;'>ROIC</div>
<div class=a style="left:1794.00px;top:1704.80px;width:48.00px;height:3.20px;background:#1a7a48;"></div>
<div class=a style="left:2085.80px;top:1690.50px;width:4.40px;height:4.40px;background:#e8e8e8;border-radius:50%;"></div>
<div class=a style="left:2092.80px;top:1690.50px;width:4.40px;height:4.40px;background:#e8e8e8;border-radius:50%;"></div>
<div class=a style="left:2099.80px;top:1690.50px;width:4.40px;height:4.40px;background:#e8e8e8;border-radius:50%;"></div>
<svg class=a style="left:2133.00px;top:1683.00px;" width="20" height="20" viewBox="0 0 20 20"><path d='M10 1 V19 M1 10 H19' stroke='#e8e8e8' stroke-width='1.8'/></svg>
<div class=a style="left:2190.00px;top:1684.00px;width:4.00px;height:4.00px;background:#e8e8e8;border-radius:50%;"></div>
<div class=a style="left:2190.00px;top:1691.50px;width:4.00px;height:4.00px;background:#e8e8e8;border-radius:50%;"></div>
<div class=a style="left:2190.00px;top:1699.00px;width:4.00px;height:4.00px;background:#e8e8e8;border-radius:50%;"></div>
<div class=a style="left:2215.60px;top:1679.80px;width:644.00px;height:26.00px;background:#161616;border-radius:13px;"></div>
<svg class=a style="left:2222.00px;top:1686.00px;" width="13" height="15" viewBox="0 0 13 15"><path d='M11 1.5 V13.5 L2 7.5 Z' fill='#9c9c9c' stroke='#9c9c9c' stroke-width='1.4' stroke-linejoin='round'/></svg>
<div class=a style="left:2241.60px;top:1686.90px;width:552.40px;height:12.10px;background:#9c9c9c;border-radius:6px;"></div>
<svg class=a style="left:2840.00px;top:1686.00px;" width="13" height="15" viewBox="0 0 13 15"><path d='M2 1.5 V13.5 L11 7.5 Z' fill='#9c9c9c' stroke='#9c9c9c' stroke-width='1.4' stroke-linejoin='round'/></svg>
<div class=a style="left:11.00px;top:1717.50px;width:2880.00px;height:33.50px;background:#141414;"></div>
<div class=a style="left:11.00px;top:1717.50px;width:2880.00px;height:1.00px;background:#2e2e2e;"></div>
<div class=t style='left:27.30px;top:1725.21px;font-size:18.00px;color:#e6e6e6;transform:scaleX(0.8053);'>Ready</div>
<svg class=a style="left:98.00px;top:1725.00px;" width="24" height="22" viewBox="0 0 24 22"><rect x='1' y='1' width='21' height='18' stroke='#e6e6e6' stroke-width='1.5' fill='none'/><path d='M1 5 H22 M4 9 H9 M4 12 H8 M4 15 H8' stroke='#e6e6e6' stroke-width='1.4'/><circle cx='15.5' cy='14' r='6' stroke='#e6e6e6' stroke-width='1.5' fill='#141414'/><circle cx='15.5' cy='14' r='2.6' fill='#e6e6e6'/></svg>
<svg class=a style="left:145.00px;top:1724.00px;" width="24" height="24" viewBox="0 0 24 24"><circle cx='10' cy='3.5' r='2.5' stroke='#e6e6e6' stroke-width='1.4' fill='none'/><path d='M2 7 Q10 11 18 7 M10 9.5 V15 L5 22 M10 15 L13 19 M14 17 L21 23 M21 17 L14 23' stroke='#e6e6e6' stroke-width='1.5' fill='none'/></svg>
<div class=t style='left:173.70px;top:1725.21px;font-size:18.00px;color:#e6e6e6;font-weight:700;transform:scaleX(0.8680);'>Accessibility: Investigate</div>
<div class=a style="left:2445.00px;top:1719.00px;width:60.00px;height:31.70px;background:#262626;"></div>
<svg class=a style="left:2463.00px;top:1724.00px;" width="22" height="20" viewBox="0 0 22 20"><g stroke='#e6e6e6' stroke-width='1.6' fill='none'><rect x='1' y='1' width='20' height='18'/><path d='M7.7 1 V19 M14.3 1 V19 M1 7 H21 M1 13 H21'/></g></svg>
<svg class=a style="left:2523.00px;top:1724.00px;" width="24" height="20" viewBox="0 0 24 20"><g stroke='#e6e6e6' stroke-width='1.6' fill='none'><rect x='1' y='1' width='22' height='18'/><rect x='5' y='4' width='14' height='12'/><path d='M8 7.5 H16 M8 10 H16 M8 12.5 H16'/></g></svg>
<svg class=a style="left:2583.00px;top:1724.00px;" width="24" height="20" viewBox="0 0 24 20"><g stroke='#e6e6e6' stroke-width='1.6' fill='none'><rect x='1' y='1' width='22' height='18'/><path d='M1 12 H12 V1 M7 1 V12'/></g></svg>
<div class=a style="left:2633.00px;top:1733.50px;width:11.50px;height:1.50px;background:#d0d0d0;"></div>
<div class=a style="left:2653.00px;top:1733.80px;width:147.80px;height:1.60px;background:#9c9c9c;"></div>
<div class=a style="left:2727.00px;top:1725.60px;width:9.00px;height:16.80px;background:#b0b0b0;border-radius:2px;"></div>
<svg class=a style="left:2808.00px;top:1727.00px;" width="14" height="14" viewBox="0 0 14 14"><path d='M7 0 V14 M0 7 H14' stroke='#d0d0d0' stroke-width='1.5'/></svg>
<div class=t style='left:2840.50px;top:1724.87px;font-size:17.50px;color:#e6e6e6;transform:scaleX(0.8600);'>120%</div>
</body></html>
